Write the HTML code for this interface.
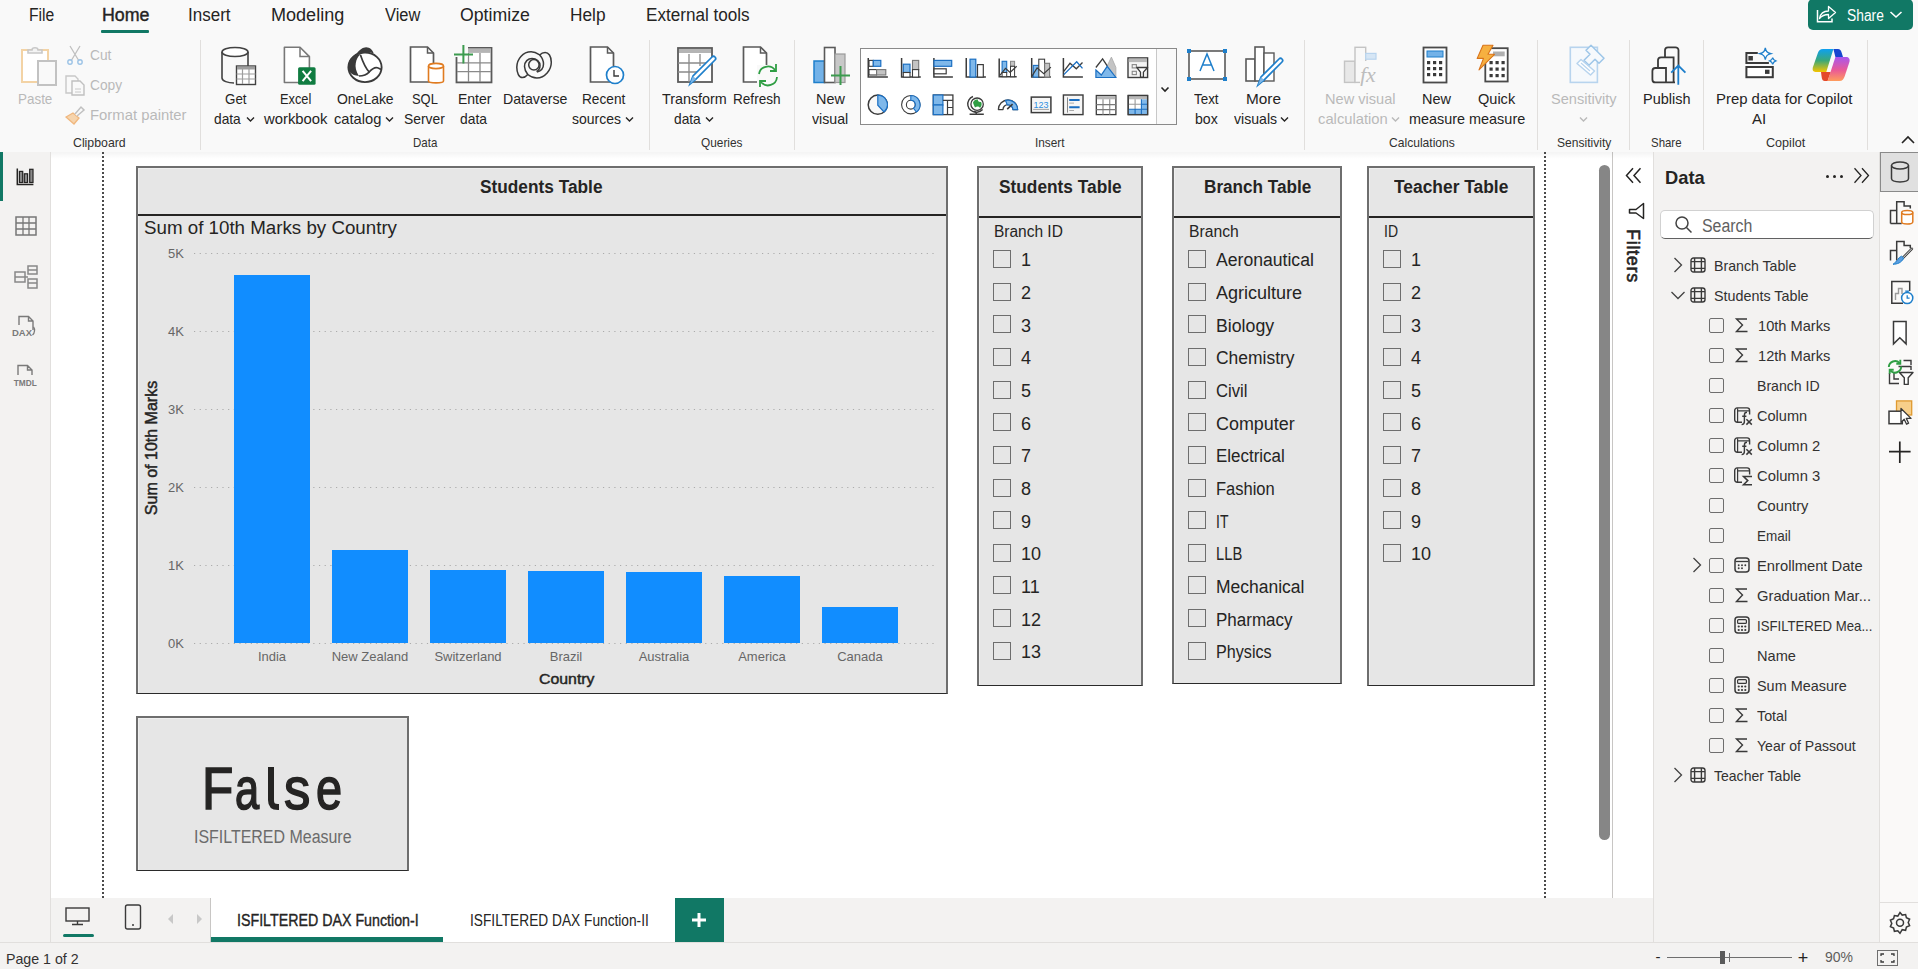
<!DOCTYPE html>
<html><head><meta charset="utf-8"><title>Power BI</title>
<style>
html,body{margin:0;padding:0;width:1918px;height:969px;overflow:hidden;background:#fff;font-family:'Liberation Sans', sans-serif;}
div,svg{box-sizing:border-box;}
</style></head><body>
<div style="position:absolute;left:0px;top:0px;width:1918px;height:152px;background:#f9f9f9;"></div><div style="position:absolute;left:0px;top:152px;width:1918px;height:3px;background:linear-gradient(#e6e6e6,#f9f9f9 0%,rgba(255,255,255,0));"></div><div style="position:absolute;left:0px;top:152px;width:51px;height:790px;background:#f3f2f1;"></div><div style="position:absolute;left:50px;top:152px;width:1px;height:746px;background:#e1dfdd;"></div><div style="position:absolute;left:51px;top:152px;width:1561px;height:746px;background:#ffffff;"></div><div style="position:absolute;left:1612px;top:152px;width:41px;height:746px;background:#ffffff;"></div><div style="position:absolute;left:1612px;top:152px;width:1px;height:746px;background:#c8c6c4;"></div><div style="position:absolute;left:1653px;top:152px;width:227px;height:790px;background:#f3f2f1;"></div><div style="position:absolute;left:1653px;top:152px;width:1px;height:790px;background:#e1dfdd;"></div><div style="position:absolute;left:1880px;top:152px;width:38px;height:790px;background:#faf9f8;"></div><div style="position:absolute;left:1879px;top:152px;width:1px;height:790px;background:#e1dfdd;"></div><div style="position:absolute;left:51px;top:898px;width:1602px;height:44px;background:#f3f2f1;"></div><div style="position:absolute;left:0px;top:942px;width:1918px;height:27px;background:#f3f2f1;"></div><div style="position:absolute;left:0px;top:942px;width:1918px;height:1px;background:#e1dfdd;"></div><div style="position:absolute;top:5.77px;font-size:18px;line-height:18px;color:#252423;font-weight:normal;white-space:nowrap;left:28.75px;transform:scaleX(0.8707);transform-origin:0 0;">File</div><div style="position:absolute;top:5.77px;font-size:18px;line-height:18px;color:#252423;font-weight:normal;white-space:nowrap;left:101.50px;transform:scaleX(0.9896);transform-origin:0 0;-webkit-text-stroke:0.4px #252423;">Home</div><div style="position:absolute;top:5.77px;font-size:18px;line-height:18px;color:#252423;font-weight:normal;white-space:nowrap;left:188.00px;transform:scaleX(0.9444);transform-origin:0 0;">Insert</div><div style="position:absolute;top:5.77px;font-size:18px;line-height:18px;color:#252423;font-weight:normal;white-space:nowrap;left:271.20px;transform:scaleX(1.0027);transform-origin:0 0;">Modeling</div><div style="position:absolute;top:5.77px;font-size:18px;line-height:18px;color:#252423;font-weight:normal;white-space:nowrap;left:384.50px;transform:scaleX(0.9125);transform-origin:0 0;">View</div><div style="position:absolute;top:5.77px;font-size:18px;line-height:18px;color:#252423;font-weight:normal;white-space:nowrap;left:460.20px;transform:scaleX(0.9831);transform-origin:0 0;">Optimize</div><div style="position:absolute;top:5.77px;font-size:18px;line-height:18px;color:#252423;font-weight:normal;white-space:nowrap;left:570.00px;transform:scaleX(0.9595);transform-origin:0 0;">Help</div><div style="position:absolute;top:5.77px;font-size:18px;line-height:18px;color:#252423;font-weight:normal;white-space:nowrap;left:646.20px;transform:scaleX(0.9505);transform-origin:0 0;">External tools</div><div style="position:absolute;left:101px;top:30px;width:48px;height:3px;background:#117865;border-radius:1px;"></div><div style="position:absolute;left:1808px;top:-1px;width:105px;height:31px;background:#117865;border-radius:5px;"></div><svg style="position:absolute;left:1816px;top:3px;" width="22" height="22" viewBox="0 0 22 22" fill="none"><path d="M1.5 7V18.8H16V15.5" stroke="#fff" stroke-width="1.5"/><path d="M3.5 15.5C4.5 10 8 8 12.5 8V3.5L19.5 9.5 12.5 15.5V11.5C9 11.5 6 12.5 3.5 15.5Z" stroke="#fff" stroke-width="1.3" stroke-linejoin="round"/></svg><div style="position:absolute;top:8.46px;font-size:16px;line-height:16px;color:#ffffff;font-weight:normal;white-space:nowrap;left:1846.70px;transform:scaleX(0.8628);transform-origin:0 0;">Share</div><svg style="position:absolute;left:1889px;top:10px;" width="14" height="10" viewBox="0 0 14 10" fill="none"><path d="M1.5 2l5.5 5 5.5-5" stroke="#fff" stroke-width="1.6"/></svg><div style="position:absolute;left:200px;top:40px;width:1px;height:110px;background:#e1dfdd;"></div><div style="position:absolute;left:649px;top:40px;width:1px;height:110px;background:#e1dfdd;"></div><div style="position:absolute;left:794px;top:40px;width:1px;height:110px;background:#e1dfdd;"></div><div style="position:absolute;left:1304px;top:40px;width:1px;height:110px;background:#e1dfdd;"></div><div style="position:absolute;left:1537px;top:40px;width:1px;height:110px;background:#e1dfdd;"></div><div style="position:absolute;left:1629px;top:40px;width:1px;height:110px;background:#e1dfdd;"></div><div style="position:absolute;left:1703px;top:40px;width:1px;height:110px;background:#e1dfdd;"></div><div style="position:absolute;left:1867px;top:40px;width:1px;height:110px;background:#e1dfdd;"></div><div style="position:absolute;top:136.00px;font-size:13px;line-height:13px;color:#323130;font-weight:normal;white-space:nowrap;left:73.00px;transform:scaleX(0.9464);transform-origin:0 0;">Clipboard</div><div style="position:absolute;top:136.00px;font-size:13px;line-height:13px;color:#323130;font-weight:normal;white-space:nowrap;left:412.50px;transform:scaleX(0.8857);transform-origin:0 0;">Data</div><div style="position:absolute;top:136.00px;font-size:13px;line-height:13px;color:#323130;font-weight:normal;white-space:nowrap;left:700.80px;transform:scaleX(0.9109);transform-origin:0 0;">Queries</div><div style="position:absolute;top:136.00px;font-size:13px;line-height:13px;color:#323130;font-weight:normal;white-space:nowrap;left:1034.60px;transform:scaleX(0.9091);transform-origin:0 0;">Insert</div><div style="position:absolute;top:136.00px;font-size:13px;line-height:13px;color:#323130;font-weight:normal;white-space:nowrap;left:1388.60px;transform:scaleX(0.9296);transform-origin:0 0;">Calculations</div><div style="position:absolute;top:136.00px;font-size:13px;line-height:13px;color:#323130;font-weight:normal;white-space:nowrap;left:1556.80px;transform:scaleX(0.9271);transform-origin:0 0;">Sensitivity</div><div style="position:absolute;top:136.00px;font-size:13px;line-height:13px;color:#323130;font-weight:normal;white-space:nowrap;left:1651.00px;transform:scaleX(0.8800);transform-origin:0 0;">Share</div><div style="position:absolute;top:136.00px;font-size:13px;line-height:13px;color:#323130;font-weight:normal;white-space:nowrap;left:1765.50px;transform:scaleX(0.9683);transform-origin:0 0;">Copilot</div><svg style="position:absolute;left:1900px;top:135px;" width="16" height="10" viewBox="0 0 16 10" fill="none"><path d="M2 8l6-6 6 6" stroke="#252423" stroke-width="1.6"/></svg><svg style="position:absolute;left:18px;top:45px;" width="40" height="42" viewBox="0 0 40 42" fill="none">
<rect x="4" y="5" width="26" height="32" fill="#fff" stroke="#f3d3a5" stroke-width="2"/>
<path d="M10 8v-3h4c0-3 6-3 6 0h4v3z" fill="#f4f4f4" stroke="#c8c8c8" stroke-width="1.6"/>
<rect x="20" y="16" width="18" height="24" fill="#f9f9f9" stroke="#c2c2c2" stroke-width="2"/>
</svg><div style="position:absolute;top:91.31px;font-size:15px;line-height:15px;color:#b9b9b9;font-weight:normal;white-space:nowrap;left:18.00px;transform:scaleX(0.8947);transform-origin:0 0;">Paste</div><svg style="position:absolute;left:66px;top:44px;" width="18" height="22" viewBox="0 0 18 22" fill="none"><path d="M4 2l9 15M14 2l-9 15" stroke="#c0c0c0" stroke-width="1.3"/><circle cx="4" cy="18" r="2.2" stroke="#9cc3e6" stroke-width="1.4"/><circle cx="14" cy="18" r="2.2" stroke="#9cc3e6" stroke-width="1.4"/></svg><div style="position:absolute;top:46.81px;font-size:15px;line-height:15px;color:#b9b9b9;font-weight:normal;white-space:nowrap;left:90.00px;transform:scaleX(0.9167);transform-origin:0 0;">Cut</div><svg style="position:absolute;left:64px;top:74px;" width="22" height="22" viewBox="0 0 22 22" fill="none"><path d="M2 2h9l3 3v14H2z" fill="#f9f9f9" stroke="#c8c8c8" stroke-width="1.4"/><path d="M8 7h8l4 4v10H8z" fill="#f9f9f9" stroke="#c0c0c0" stroke-width="1.4"/><path d="M11 15h6M11 18h6" stroke="#c8c8c8"/></svg><div style="position:absolute;top:76.81px;font-size:15px;line-height:15px;color:#b9b9b9;font-weight:normal;white-space:nowrap;left:90.00px;transform:scaleX(0.9167);transform-origin:0 0;">Copy</div><svg style="position:absolute;left:64px;top:104px;" width="22" height="22" viewBox="0 0 22 22" fill="none"><path d="M2 13l8 7 5-6-6-5z" fill="#f6d4ad" stroke="#f0b77e" stroke-width="1.3"/><path d="M11 10l6-7 3 3-7 6" stroke="#c0c0c0" stroke-width="1.5" fill="#f9f9f9"/></svg><div style="position:absolute;top:106.81px;font-size:15px;line-height:15px;color:#b9b9b9;font-weight:normal;white-space:nowrap;left:90.00px;transform:scaleX(0.9898);transform-origin:0 0;">Format painter</div><svg style="position:absolute;left:218px;top:44px;" width="42" height="44" viewBox="0 0 42 44" fill="none">
<path d="M4 8v26c0 3 6 5 12 5" stroke="#424242" stroke-width="1.6"/>
<ellipse cx="17" cy="8" rx="13" ry="4.5" stroke="#424242" stroke-width="1.6" fill="#fff"/>
<path d="M30 8v14" stroke="#424242" stroke-width="1.6"/>
<rect x="18.5" y="22" width="19" height="18.5" fill="#fff" stroke="#424242" stroke-width="1.4"/>
<rect x="19" y="22.5" width="18" height="3" fill="#9e9e9e"/>
<path d="M18.5 30h19M18.5 35h19M24.5 25v15M31 25v15" stroke="#9e9e9e" stroke-width="1.2"/>
</svg><div style="position:absolute;top:91.31px;font-size:15px;line-height:15px;color:#252423;font-weight:normal;white-space:nowrap;left:224.60px;transform:scaleX(0.8920);transform-origin:0 0;">Get</div><div style="position:absolute;top:111.31px;font-size:15px;line-height:15px;color:#252423;font-weight:normal;white-space:nowrap;left:214.40px;transform:scaleX(0.9167);transform-origin:0 0;">data</div><svg style="position:absolute;left:245.5px;top:116px;" width="9" height="7" viewBox="0 0 9 7" fill="none"><path d="M1 1.5l3.5 3.5 3.5-3.5" stroke="#252423" stroke-width="1.4"/></svg><svg style="position:absolute;left:280px;top:44px;" width="40" height="44" viewBox="0 0 40 44" fill="none">
<path d="M4.4 3.2H20L29.4 12.6V38.5H4.4Z" fill="#fff" stroke="#787878" stroke-width="1.6" stroke-linejoin="round"/>
<path d="M20 3.2V12.6H29.4" stroke="#787878" stroke-width="1.5"/>
<rect x="18.1" y="23.2" width="17.5" height="17.5" rx="1.5" fill="#107c41"/>
<path d="M22.6 26.8l8.5 10.4M31.1 26.8l-8.5 10.4" stroke="#fff" stroke-width="2"/>
</svg><div style="position:absolute;top:91.31px;font-size:15px;line-height:15px;color:#252423;font-weight:normal;white-space:nowrap;left:280.40px;transform:scaleX(0.8541);transform-origin:0 0;">Excel</div><div style="position:absolute;top:111.31px;font-size:15px;line-height:15px;color:#252423;font-weight:normal;white-space:nowrap;left:264.49px;transform:scaleX(0.9886);transform-origin:0 0;">workbook</div><svg style="position:absolute;left:346px;top:45px;" width="40" height="40" viewBox="0 0 40 40" fill="none">
<ellipse cx="19" cy="22.3" rx="16.6" ry="14.8" stroke="#3a3a3a" stroke-width="1.9" fill="#fff"/>
<path d="M9.8 9.4C4 12 2 18 2.05 22C2.5 27 5 30 12.9 31C10 26 9 22 9.8 18C10.5 14 12 11 14.4 9.4Z" fill="#3a3a3a"/>
<path d="M9.8 9.4C13 5 17 2.2 20.1 2.2C24 2.2 26.5 5 27.8 8.4C23 6.8 18 7 14.4 9.4Z" fill="#3a3a3a"/>
<path d="M14.5 10C16.5 16 19.5 23 23.2 27C26 24 29 22 31.4 22.8C33 23.3 34 24 35 24.5" stroke="#3a3a3a" stroke-width="1.7"/>
<path d="M12.9 31C17 31 21 29.5 23.2 27" stroke="#3a3a3a" stroke-width="1.7"/>
</svg><div style="position:absolute;top:91.31px;font-size:15px;line-height:15px;color:#252423;font-weight:normal;white-space:nowrap;left:337.00px;transform:scaleX(0.9303);transform-origin:0 0;">OneLake</div><div style="position:absolute;top:111.31px;font-size:15px;line-height:15px;color:#252423;font-weight:normal;white-space:nowrap;left:334.00px;transform:scaleX(0.9792);transform-origin:0 0;">catalog</div><svg style="position:absolute;left:385px;top:116px;" width="9" height="7" viewBox="0 0 9 7" fill="none"><path d="M1 1.5l3.5 3.5 3.5-3.5" stroke="#252423" stroke-width="1.4"/></svg><svg style="position:absolute;left:407px;top:44px;" width="40" height="44" viewBox="0 0 40 44" fill="none">
<path d="M3.5 3h17l6 6v29h-23z" fill="#fff" stroke="#5a5a5a" stroke-width="1.7"/>
<path d="M20.5 3v6h6" stroke="#5a5a5a" stroke-width="1.5"/>
<path d="M21.5 22v15c0 2.5 15 2.5 15 0V22" fill="#fff" stroke="#e07b20" stroke-width="1.6"/>
<ellipse cx="29" cy="22" rx="7.5" ry="2.6" fill="#fff" stroke="#e07b20" stroke-width="1.6"/>
</svg><div style="position:absolute;top:91.31px;font-size:15px;line-height:15px;color:#252423;font-weight:normal;white-space:nowrap;left:411.50px;transform:scaleX(0.8600);transform-origin:0 0;">SQL</div><div style="position:absolute;top:111.31px;font-size:15px;line-height:15px;color:#252423;font-weight:normal;white-space:nowrap;left:404.00px;transform:scaleX(0.9250);transform-origin:0 0;">Server</div><svg style="position:absolute;left:452px;top:43px;" width="44" height="44" viewBox="0 0 44 44" fill="none">
<rect x="4.5" y="4.9" width="35" height="34.5" fill="#fff" stroke="#5a5a5a" stroke-width="1.8"/>
<rect x="15" y="5.4" width="24" height="4.5" fill="#b4b4b4"/>
<path d="M5 19.8h34M5 28.6h34M16.5 10v29M28 10v29" stroke="#8a8a8a" stroke-width="1.3"/>
<rect x="0" y="0" width="16" height="14" fill="#f9f9f9"/>
<path d="M2 11.4h19M11.4 2v18.5" stroke="#3c9b4f" stroke-width="2"/>
</svg><div style="position:absolute;top:91.31px;font-size:15px;line-height:15px;color:#252423;font-weight:normal;white-space:nowrap;left:458.30px;transform:scaleX(0.9333);transform-origin:0 0;">Enter</div><div style="position:absolute;top:111.31px;font-size:15px;line-height:15px;color:#252423;font-weight:normal;white-space:nowrap;left:460.30px;transform:scaleX(0.9233);transform-origin:0 0;">data</div><svg style="position:absolute;left:510px;top:45px;" width="44" height="38" viewBox="0 0 44 38" fill="none">
<path d="M29.7 9.9C26 7.5 23.5 6.8 21.1 6.8C13 6.8 6.8 14 6.8 22.3C6.8 28 9 32.6 12.4 32.6C14.5 32.6 16.5 31 17.8 29.5C20.5 31.8 23.5 33 26.8 33C35 33 41.3 25 41.3 17.3C41.3 11 38.5 7.4 35.1 7.4C33 7.4 31 8.5 29.7 9.9Z" stroke="#3a3a3a" stroke-width="1.5"/>
<path d="M29.7 9.9C32.5 13 33.5 16 33.5 19C33.5 23 31 26 27 27" stroke="#3a3a3a" stroke-width="1.5"/>
<path d="M17.8 29.5C15.5 26.5 14.5 24 14.5 21.5C14.5 16.5 18 13.5 22 13.5C26.5 13.5 30 16.5 30 20.5C30 23.5 28.5 25.5 26.5 26.5" stroke="#3a3a3a" stroke-width="1.5"/>
<circle cx="23.9" cy="19.8" r="5.2" stroke="#3a3a3a" stroke-width="1.5"/>
</svg><div style="position:absolute;top:91.31px;font-size:15px;line-height:15px;color:#252423;font-weight:normal;white-space:nowrap;left:502.60px;transform:scaleX(0.9426);transform-origin:0 0;">Dataverse</div><svg style="position:absolute;left:587px;top:44px;" width="40" height="44" viewBox="0 0 40 44" fill="none">
<path d="M3.5 3h17l6 6v29h-23z" fill="#fff" stroke="#5a5a5a" stroke-width="1.7"/>
<path d="M20.5 3v6h6" stroke="#5a5a5a" stroke-width="1.5"/>
<circle cx="28" cy="31" r="8.5" fill="#fff" stroke="#1e7fcb" stroke-width="1.7"/>
<path d="M27 26v6h5" stroke="#3a3a3a" stroke-width="1.4"/>
</svg><div style="position:absolute;top:91.31px;font-size:15px;line-height:15px;color:#252423;font-weight:normal;white-space:nowrap;left:582.30px;transform:scaleX(0.9104);transform-origin:0 0;">Recent</div><div style="position:absolute;top:111.31px;font-size:15px;line-height:15px;color:#252423;font-weight:normal;white-space:nowrap;left:571.70px;transform:scaleX(0.9340);transform-origin:0 0;">sources</div><svg style="position:absolute;left:624.5px;top:116px;" width="9" height="7" viewBox="0 0 9 7" fill="none"><path d="M1 1.5l3.5 3.5 3.5-3.5" stroke="#252423" stroke-width="1.4"/></svg><svg style="position:absolute;left:674px;top:44px;" width="44" height="46" viewBox="0 0 44 46" fill="none">
<rect x="4" y="4" width="34" height="34" fill="#fff" stroke="#5a5a5a" stroke-width="1.8"/>
<rect x="5" y="5" width="32" height="4" fill="#b4b4b4"/>
<path d="M4 19h34M4 28h22M15 10v28M26 10v12" stroke="#8a8a8a" stroke-width="1.3"/>
<path d="M16 40l3-8 19-19c2-2 5 1 3 3L22 35z" fill="#fff" stroke="#1e7fcb" stroke-width="1.7"/>
<path d="M16 40l3-8 3 3z" fill="#7fb6e6"/>
</svg><div style="position:absolute;top:91.31px;font-size:15px;line-height:15px;color:#252423;font-weight:normal;white-space:nowrap;left:662.40px;transform:scaleX(0.9559);transform-origin:0 0;">Transform</div><div style="position:absolute;top:111.31px;font-size:15px;line-height:15px;color:#252423;font-weight:normal;white-space:nowrap;left:673.50px;transform:scaleX(0.9167);transform-origin:0 0;">data</div><svg style="position:absolute;left:705px;top:116px;" width="9" height="7" viewBox="0 0 9 7" fill="none"><path d="M1 1.5l3.5 3.5 3.5-3.5" stroke="#252423" stroke-width="1.4"/></svg><svg style="position:absolute;left:740px;top:44px;" width="40" height="46" viewBox="0 0 40 46" fill="none">
<path d="M3.5 3h17l6 6v29h-23z" fill="#fff" stroke="#5a5a5a" stroke-width="1.7"/>
<path d="M20.5 3v6h6" stroke="#5a5a5a" stroke-width="1.5"/>
<rect x="17" y="21" width="22" height="22" fill="#f9f9f9"/>
<path d="M19 30a9 9 0 0 1 16-4M37 33a9 9 0 0 1-16 5" stroke="#2f9e44" stroke-width="1.8"/>
<path d="M36 20v7h-6M20 43v-6h6" stroke="#2f9e44" stroke-width="1.8"/>
</svg><div style="position:absolute;top:91.31px;font-size:15px;line-height:15px;color:#252423;font-weight:normal;white-space:nowrap;left:733.00px;transform:scaleX(0.9057);transform-origin:0 0;">Refresh</div><svg style="position:absolute;left:810px;top:44px;" width="44" height="44" viewBox="0 0 44 44" fill="none">
<rect x="4" y="17" width="10.5" height="21.5" fill="#73b2e8" stroke="#1e7fcb" stroke-width="1.5"/>
<rect x="14.5" y="3.5" width="10.5" height="35" fill="#fff" stroke="#5a5a5a" stroke-width="1.6"/>
<rect x="25" y="10" width="10" height="28.5" fill="#c8c8c8" stroke="#9a9a9a" stroke-width="1.2"/>
<path d="M21 31.5h19M30.5 22v19" stroke="#3c9b4f" stroke-width="2"/>
</svg><div style="position:absolute;top:91.31px;font-size:15px;line-height:15px;color:#252423;font-weight:normal;white-space:nowrap;left:815.70px;transform:scaleX(0.9600);transform-origin:0 0;">New</div><div style="position:absolute;top:111.31px;font-size:15px;line-height:15px;color:#252423;font-weight:normal;white-space:nowrap;left:811.70px;transform:scaleX(0.9447);transform-origin:0 0;">visual</div><div style="position:absolute;left:860px;top:48px;width:317px;height:77px;background:#fff;border:1px solid #8a8a8a;"></div><div style="position:absolute;left:1157px;top:49px;width:19px;height:75px;background:#f9f9f9;"></div><div style="position:absolute;left:1156px;top:49px;width:1px;height:75px;background:#c8c8c8;"></div><svg style="position:absolute;left:1160px;top:86px;" width="10" height="8" viewBox="0 0 10 8" fill="none"><path d="M1.5 1.5l3.5 3.5 3.5-3.5" stroke="#252423" stroke-width="1.6"/></svg><svg style="position:absolute;left:866px;top:56px;" width="22" height="23" viewBox="0 0 22 23" fill="none"><path d="M2.25 1.9V21.1H21.9" stroke="#3c3c3c" stroke-width="1.5"/><rect x="3" y="4.4" width="4.3" height="5.9" fill="#fff" stroke="#3c3c3c" stroke-width="1.1"/><rect x="7.3" y="4.4" width="7.5" height="5.9" fill="#7fb8ea" stroke="#1b6fc2" stroke-width="1.2"/><rect x="3" y="13.6" width="7.6" height="5.4" fill="#fff" stroke="#3c3c3c" stroke-width="1.1"/><rect x="10.6" y="13.6" width="9.2" height="5.4" fill="#c4c4c4" stroke="#777" stroke-width="1.1"/></svg><svg style="position:absolute;left:866px;top:93px;" width="22" height="23" viewBox="0 0 22 23" fill="none"><circle cx="11.8" cy="11.7" r="9.6" fill="#f8f8f8" stroke="#3c3c3c" stroke-width="1.5"/><path d="M11.8 2.1A9.6 9.6 0 0 1 18 19L11.8 12.2Z" fill="#7fb8ea" stroke="#1b6fc2" stroke-width="1.2"/></svg><svg style="position:absolute;left:899px;top:56px;" width="22" height="23" viewBox="0 0 22 23" fill="none"><path d="M2.6 1.9V21.1H21.8" stroke="#3c3c3c" stroke-width="1.5"/><rect x="4.3" y="8.2" width="6.7" height="8.3" fill="#7fb8ea" stroke="#1b6fc2" stroke-width="1.2"/><rect x="4.3" y="16.5" width="6.7" height="4.6" fill="#fff" stroke="#3c3c3c" stroke-width="1.1"/><rect x="13.5" y="4.4" width="6.2" height="9.2" fill="#c4c4c4" stroke="#777" stroke-width="1.1"/><rect x="13.5" y="13.6" width="6.2" height="7.5" fill="#fff" stroke="#3c3c3c" stroke-width="1.1"/></svg><svg style="position:absolute;left:899px;top:93px;" width="22" height="23" viewBox="0 0 22 23" fill="none"><circle cx="11.8" cy="11.7" r="9.2" fill="#fff" stroke="#3c3c3c" stroke-width="1.1"/><circle cx="11.8" cy="11.7" r="4.4" fill="#fff" stroke="#3c3c3c" stroke-width="1.1"/><path d="M11.8 2.5A9.2 9.2 0 0 1 17.4 19L14.5 15.3A4.4 4.4 0 0 0 11.8 7.3Z" fill="#7fb8ea" stroke="#1b6fc2" stroke-width="1.1"/></svg><svg style="position:absolute;left:932px;top:56px;" width="22" height="23" viewBox="0 0 22 23" fill="none"><path d="M1.9 1.9V21.1H20.9" stroke="#3c3c3c" stroke-width="1.5"/><rect x="2" y="4.4" width="17.7" height="5.9" fill="#7fb8ea" stroke="#1b6fc2" stroke-width="1.2"/><rect x="2" y="12.8" width="12.2" height="5" fill="#fff" stroke="#3c3c3c" stroke-width="1.2"/></svg><svg style="position:absolute;left:932px;top:93px;" width="22" height="23" viewBox="0 0 22 23" fill="none"><rect x="1.3" y="2" width="19.6" height="19.6" fill="#fff" stroke="#3c3c3c" stroke-width="1.3"/><rect x="1.3" y="2" width="9.6" height="10" fill="#7fb8ea" stroke="#1b6fc2" stroke-width="1.2"/><rect x="1.3" y="12" width="9.6" height="9.6" fill="#7fb8ea" stroke="#1b6fc2" stroke-width="1.2"/><path d="M10.9 7.4H20.9M15.5 7.4V21.6M15.5 14.5H20.9" stroke="#3c3c3c" stroke-width="1.2"/></svg><svg style="position:absolute;left:964px;top:56px;" width="22" height="23" viewBox="0 0 22 23" fill="none"><path d="M2.25 1.9V21.1H21.9" stroke="#3c3c3c" stroke-width="1.5"/><rect x="6" y="3.2" width="5.8" height="17.9" fill="#7fb8ea" stroke="#1b6fc2" stroke-width="1.2"/><rect x="13.5" y="8.6" width="5.8" height="12.5" fill="#fff" stroke="#3c3c3c" stroke-width="1.2"/></svg><svg style="position:absolute;left:964px;top:93px;" width="22" height="23" viewBox="0 0 22 23" fill="none"><path d="M9 3.5A8 8 0 0 0 12 19" stroke="#3c3c3c" stroke-width="1.4"/><path d="M18.6 16.6A8 8 0 0 1 9.5 18.4" stroke="#3c3c3c" stroke-width="1.4"/><circle cx="13.1" cy="11.2" r="6.2" fill="#fff" stroke="#3c3c3c" stroke-width="1.3"/><path d="M9 9.5C10 7 12 6 14 6.5 13.5 8 15 9.5 17 9 18.5 11 17 14 16 15 15 13 13 13 11 14.5 10 12.5 9.5 11 9 9.5Z" fill="#2f9e44"/><path d="M12.2 19V21.2M5.6 21.2H19.8" stroke="#3c3c3c" stroke-width="1.5"/></svg><svg style="position:absolute;left:997px;top:56px;" width="22" height="23" viewBox="0 0 22 23" fill="none"><path d="M2.2 2.5V20.7H19.7" stroke="#3c3c3c" stroke-width="1.5"/><rect x="5.1" y="5.3" width="4.6" height="11.2" fill="#7fb8ea" stroke="#1b6fc2" stroke-width="1.1"/><rect x="5.1" y="16.5" width="4.6" height="4.2" fill="#fff" stroke="#3c3c3c"/><rect x="13.5" y="5.3" width="4.1" height="5" fill="#c4c4c4" stroke="#888"/><rect x="13.5" y="10.3" width="4.1" height="10.4" fill="#fff" stroke="#3c3c3c"/><path d="M2.9 19.4L8.5 12.3 13.1 16.5 19.7 10.3" stroke="#3c3c3c" stroke-width="1.2"/></svg><svg style="position:absolute;left:997px;top:93px;" width="22" height="23" viewBox="0 0 22 23" fill="none"><path d="M1.4 16.6A9.6 9.6 0 0 1 20.6 16.6H16A5 5 0 0 0 6 16.6Z" fill="#fff" stroke="#3c3c3c" stroke-width="1.3" stroke-linejoin="round"/><path d="M8.5 7.4A9.6 9.6 0 0 1 20.6 16.6H16A5 5 0 0 0 10.3 11.9Z" fill="#7fb8ea" stroke="#1b6fc2" stroke-width="1.2"/><path d="M10.2 16.2L15.6 11.2" stroke="#3c3c3c" stroke-width="1.6"/></svg><svg style="position:absolute;left:1030px;top:56px;" width="22" height="23" viewBox="0 0 22 23" fill="none"><path d="M1.7 1.9V21.1H20.9" stroke="#3c3c3c" stroke-width="1.5"/><rect x="3.3" y="9.4" width="6.3" height="11.7" fill="#7fb8ea" stroke="#1b6fc2" stroke-width="1.1"/><rect x="8.8" y="3.2" width="5.8" height="17.9" fill="#fff" stroke="#3c3c3c" stroke-width="1.1"/><rect x="14.6" y="7.3" width="5" height="13.8" fill="#c4c4c4" stroke="#777" stroke-width="1.1"/><path d="M2.1 19.9L7.1 11.9 13.8 17.8 20.9 11.1" stroke="#3c3c3c" stroke-width="1.2"/></svg><svg style="position:absolute;left:1030px;top:93px;" width="22" height="23" viewBox="0 0 22 23" fill="none"><rect x="1.3" y="4.1" width="19.6" height="15.5" fill="#f6f6f6" stroke="#3c3c3c" stroke-width="1.5"/><text x="11.1" y="14.6" font-size="9.5" text-anchor="middle" fill="#2f8fe0" font-family="Liberation Sans" textLength="15" lengthAdjust="spacingAndGlyphs">123</text><path d="M3.2 16.4H19" stroke="#999" stroke-width="0.9"/></svg><svg style="position:absolute;left:1062px;top:56px;" width="22" height="23" viewBox="0 0 22 23" fill="none"><path d="M1.4 1.9V21.1H20.9" stroke="#3c3c3c" stroke-width="1.5"/><path d="M1.8 15.3L8 7.3 14.3 12.8 20.5 6.5" stroke="#3c3c3c" stroke-width="1.3"/><path d="M1.8 18.6L14.7 5.7 20.5 12.4" stroke="#1b6fc2" stroke-width="1.3"/></svg><svg style="position:absolute;left:1062px;top:93px;" width="22" height="23" viewBox="0 0 22 23" fill="none"><rect x="1.4" y="2" width="19.6" height="19.6" fill="#f6f6f6" stroke="#3c3c3c" stroke-width="1.4"/><path d="M5.5 4.4V19.6" stroke="#888" stroke-width="1"/><path d="M7.2 7H17.6M7.2 14.3H17.6" stroke="#1b6fc2" stroke-width="1.9"/><path d="M7.2 10.1H12M7.2 17.5H12" stroke="#aaa" stroke-width="1"/></svg><svg style="position:absolute;left:1095px;top:56px;" width="22" height="23" viewBox="0 0 22 23" fill="none"><path d="M12.2 9.9L16.4 1.1 20.9 11.5V21.5H12.2Z" fill="#c4c4c4" stroke="#aaa" stroke-width="0.8"/><path d="M0.9 11.5L7.6 2.8 12.2 9.9" fill="#fff" stroke="#3c3c3c" stroke-width="1.3"/><path d="M0.9 14L6.3 19 12.2 10.3 20.9 21.5H0.9Z" fill="#7fb8ea" stroke="#1b6fc2" stroke-width="1.2"/></svg><svg style="position:absolute;left:1095px;top:93px;" width="22" height="23" viewBox="0 0 22 23" fill="none"><rect x="1.3" y="2.5" width="19.6" height="19.1" fill="#fff" stroke="#3c3c3c" stroke-width="1.3"/><rect x="1.9" y="3.1" width="18.4" height="3.2" fill="#b8b8b8"/><path d="M8 6.3V21.6M14.7 6.3V21.6" stroke="#9a9a9a" stroke-width="1.3"/><path d="M1.3 11.6H20.9M1.3 16.6H20.9" stroke="#7a7a7a" stroke-width="1.1"/></svg><svg style="position:absolute;left:1127px;top:56px;" width="22" height="23" viewBox="0 0 22 23" fill="none"><rect x="1" y="1.9" width="19.6" height="19.6" fill="#f4f4f4" stroke="#3c3c3c" stroke-width="1.4"/><rect x="1.7" y="2.6" width="18.2" height="3.5" fill="#b8b8b8"/><rect x="5.2" y="8.6" width="4.2" height="3.3" fill="none" stroke="#888" stroke-width="1.1"/><rect x="5.2" y="15.3" width="4.2" height="3.3" fill="none" stroke="#888" stroke-width="1.1"/><path d="M9.8 11.5H20.6L16.4 16.1V21.1H13.5V16.1Z" fill="#fff" stroke="#3c3c3c" stroke-width="1.3" stroke-linejoin="round"/></svg><svg style="position:absolute;left:1127px;top:93px;" width="22" height="23" viewBox="0 0 22 23" fill="none"><rect x="1.2" y="2.5" width="19.4" height="19.1" fill="#fff" stroke="#3c3c3c" stroke-width="1.3"/><rect x="1.8" y="3.1" width="18.2" height="3.2" fill="#b8b8b8"/><rect x="14.4" y="6.3" width="6.2" height="15.3" fill="#7fb8ea"/><rect x="1.2" y="16.2" width="19.4" height="5.4" fill="#7fb8ea"/><path d="M8.1 6.3V16.2M1.2 11.2H14.4" stroke="#9a9a9a" stroke-width="1.1"/><path d="M14.4 6.3V21.6M8.1 16.2V21.6M14.4 11.2H20.6M1.2 16.2H20.6" stroke="#1b6fc2" stroke-width="1.1"/><rect x="1.2" y="2.5" width="19.4" height="19.1" fill="none" stroke="#3c3c3c" stroke-width="1.3"/></svg><svg style="position:absolute;left:1186px;top:48px;" width="42" height="34" viewBox="0 0 42 34" fill="none">
<rect x="3" y="3" width="36" height="28" fill="#fff" stroke="#5a5a5a" stroke-width="1.6"/>
<rect x="1" y="1" width="4" height="4" fill="#1e7fcb"/><rect x="37" y="1" width="4" height="4" fill="#1e7fcb"/>
<rect x="1" y="29" width="4" height="4" fill="#1e7fcb"/><rect x="37" y="29" width="4" height="4" fill="#1e7fcb"/>
<path d="M14 23l7-17 7 17M16.5 17h9" stroke="#1e7fcb" stroke-width="1.5"/>
</svg><div style="position:absolute;top:91.31px;font-size:15px;line-height:15px;color:#252423;font-weight:normal;white-space:nowrap;left:1194.00px;transform:scaleX(0.8929);transform-origin:0 0;">Text</div><div style="position:absolute;top:111.31px;font-size:15px;line-height:15px;color:#252423;font-weight:normal;white-space:nowrap;left:1194.50px;transform:scaleX(0.9400);transform-origin:0 0;">box</div><svg style="position:absolute;left:1243px;top:44px;" width="44" height="44" viewBox="0 0 44 44" fill="none">
<rect x="3" y="15" width="9" height="22" fill="#fff" stroke="#5a5a5a" stroke-width="1.6"/>
<rect x="12" y="3" width="9" height="34" fill="#fff" stroke="#5a5a5a" stroke-width="1.6"/>
<rect x="21" y="9" width="10" height="28" fill="#fff" stroke="#5a5a5a" stroke-width="1.4"/>
<path d="M15 41l3-8 18-18c2-2 5 1 3 3L21 36z" fill="#fff" stroke="#1e7fcb" stroke-width="1.7"/>
<path d="M15 41l3-8 3 3z" fill="#7fb6e6"/>
</svg><div style="position:absolute;top:91.31px;font-size:15px;line-height:15px;color:#252423;font-weight:normal;white-space:nowrap;left:1245.70px;transform:scaleX(1.0235);transform-origin:0 0;">More</div><div style="position:absolute;top:111.31px;font-size:15px;line-height:15px;color:#252423;font-weight:normal;white-space:nowrap;left:1233.70px;transform:scaleX(0.9391);transform-origin:0 0;">visuals</div><svg style="position:absolute;left:1280px;top:116px;" width="9" height="7" viewBox="0 0 9 7" fill="none"><path d="M1 1.5l3.5 3.5 3.5-3.5" stroke="#252423" stroke-width="1.4"/></svg><svg style="position:absolute;left:1340px;top:44px;" width="42" height="42" viewBox="0 0 42 42" fill="none">
<rect x="4.5" y="17.2" width="10.5" height="21.2" fill="#e8e8e8" stroke="#c4c4c4" stroke-width="1.4"/>
<rect x="15" y="3.3" width="10.7" height="35.1" fill="#f8f8f8" stroke="#c4c4c4" stroke-width="1.4"/>
<rect x="25.7" y="9.4" width="10.3" height="5.8" fill="#d6e6f5" stroke="#b8d4ee" stroke-width="1.2"/>
<rect x="20" y="17" width="19" height="23" fill="#f9f9f9"/>
<text x="20" y="38" font-family="Liberation Serif" font-style="italic" font-size="22" fill="#bdbdbd">fx</text>
</svg><div style="position:absolute;top:91.31px;font-size:15px;line-height:15px;color:#b9b9b9;font-weight:normal;white-space:nowrap;left:1325.00px;transform:scaleX(0.9726);transform-origin:0 0;">New visual</div><div style="position:absolute;top:111.31px;font-size:15px;line-height:15px;color:#b9b9b9;font-weight:normal;white-space:nowrap;left:1317.70px;transform:scaleX(0.9845);transform-origin:0 0;">calculation</div><svg style="position:absolute;left:1391px;top:116px;" width="9" height="7" viewBox="0 0 9 7" fill="none"><path d="M1 1.5l3.5 3.5 3.5-3.5" stroke="#b9b9b9" stroke-width="1.4"/></svg><svg style="position:absolute;left:1420px;top:44px;" width="30" height="42" viewBox="0 0 30 42" fill="none">
<rect x="3.5" y="3.5" width="23" height="35" fill="#fff" stroke="#4a4a4a" stroke-width="1.8"/>
<rect x="7" y="7" width="16" height="6" fill="#73b2e8" stroke="#1e7fcb" stroke-width="1"/>
<rect x="7" y="17" width="3.2" height="3.2" fill="#3a3a3a"/><rect x="13" y="17" width="3.2" height="3.2" fill="#3a3a3a"/><rect x="19" y="17" width="3.2" height="3.2" fill="#3a3a3a"/><rect x="7" y="23" width="3.2" height="3.2" fill="#3a3a3a"/><rect x="13" y="23" width="3.2" height="3.2" fill="#3a3a3a"/><rect x="19" y="23" width="3.2" height="3.2" fill="#3a3a3a"/><rect x="7" y="29" width="3.2" height="3.2" fill="#3a3a3a"/><rect x="13" y="29" width="3.2" height="3.2" fill="#3a3a3a"/><rect x="19" y="29" width="3.2" height="3.2" fill="#3a3a3a"/></svg><div style="position:absolute;top:91.31px;font-size:15px;line-height:15px;color:#252423;font-weight:normal;white-space:nowrap;left:1421.80px;transform:scaleX(0.9667);transform-origin:0 0;">New</div><div style="position:absolute;top:111.31px;font-size:15px;line-height:15px;color:#252423;font-weight:normal;white-space:nowrap;left:1408.60px;transform:scaleX(0.9603);transform-origin:0 0;">measure</div><svg style="position:absolute;left:1474px;top:42px;" width="38" height="44" viewBox="0 0 38 44" fill="none">
<rect x="11.3" y="6.2" width="22.4" height="33.3" fill="#fff" stroke="#4a4a4a" stroke-width="1.8"/>
<rect x="19" y="9.5" width="11.7" height="4.8" fill="#b0b0b0"/>
<rect x="15.5" y="19.0" width="3.2" height="3.2" fill="#3a3a3a"/><rect x="21.5" y="19.0" width="3.2" height="3.2" fill="#3a3a3a"/><rect x="27.5" y="19.0" width="3.2" height="3.2" fill="#3a3a3a"/><rect x="15.5" y="25.5" width="3.2" height="3.2" fill="#3a3a3a"/><rect x="21.5" y="25.5" width="3.2" height="3.2" fill="#3a3a3a"/><rect x="27.5" y="25.5" width="3.2" height="3.2" fill="#3a3a3a"/><rect x="15.5" y="32.0" width="3.2" height="3.2" fill="#3a3a3a"/><rect x="21.5" y="32.0" width="3.2" height="3.2" fill="#3a3a3a"/><rect x="27.5" y="32.0" width="3.2" height="3.2" fill="#3a3a3a"/>
<path d="M9 3.3h10l-5 9h6.5L5 27.9l4.5-11.5H3.2z" fill="#f6b040" stroke="#d9731a" stroke-width="1.1" stroke-linejoin="round"/>
</svg><div style="position:absolute;top:91.31px;font-size:15px;line-height:15px;color:#252423;font-weight:normal;white-space:nowrap;left:1478.00px;transform:scaleX(0.9692);transform-origin:0 0;">Quick</div><div style="position:absolute;top:111.31px;font-size:15px;line-height:15px;color:#252423;font-weight:normal;white-space:nowrap;left:1469.00px;transform:scaleX(0.9638);transform-origin:0 0;">measure</div><svg style="position:absolute;left:1566px;top:42px;" width="42" height="44" viewBox="0 0 42 44" fill="none">
<rect x="4.3" y="5.3" width="27.1" height="35.1" fill="#f6f9fc" stroke="#b8d4ee" stroke-width="1.6"/>
<path d="M25 3.3l-5 5 4 4-6 6 5 5 6-6 4 4 5-5z" fill="#f6f9fc" stroke="#9ec6e8" stroke-width="1.5" stroke-linejoin="round"/>
<path d="M11 21.5l4-4 13.5 11.5-4 4z" fill="#fff" stroke="#b8d4ee" stroke-width="1.5" stroke-linejoin="round"/>
<path d="M15 21l9 8" stroke="#b8d4ee" stroke-width="1.2"/>
</svg><div style="position:absolute;top:91.31px;font-size:15px;line-height:15px;color:#b9b9b9;font-weight:normal;white-space:nowrap;left:1550.60px;transform:scaleX(0.9721);transform-origin:0 0;">Sensitivity</div><svg style="position:absolute;left:1579px;top:116px;" width="9" height="7" viewBox="0 0 9 7" fill="none"><path d="M1 1.5l3.5 3.5 3.5-3.5" stroke="#b9b9b9" stroke-width="1.4"/></svg><svg style="position:absolute;left:1649px;top:44px;" width="42" height="44" viewBox="0 0 42 44" fill="none">
<path d="M16 13.3V6.3a3 3 0 0 1 3-3H26.5a3 3 0 0 1 3 3V38.4" stroke="#3a3a3a" stroke-width="1.8"/>
<path d="M9 24V16.3a3 3 0 0 1 3-3H24.6V38.4" stroke="#3a3a3a" stroke-width="1.8"/>
<path d="M17 38.4H6.4a3 3 0 0 1-3-3V27a3 3 0 0 1 3-3H17V38.4H28" stroke="#3a3a3a" stroke-width="1.8"/>
<rect x="26" y="24" width="7" height="17" fill="#f9f9f9"/>
<path d="M29.3 40.8V21.5M22.2 28.6l7.1-7.1 7.1 7.1" stroke="#1e7fcb" stroke-width="1.8"/>
</svg><div style="position:absolute;top:91.31px;font-size:15px;line-height:15px;color:#252423;font-weight:normal;white-space:nowrap;left:1642.50px;transform:scaleX(0.9653);transform-origin:0 0;">Publish</div><svg style="position:absolute;left:1741px;top:44px;" width="40" height="38" viewBox="0 0 40 38" fill="none">
<path d="M16.8 9H5.4v10h22.5" stroke="#3a3a3a" stroke-width="2" fill="none"/>
<rect x="5.4" y="23" width="26.4" height="10.2" fill="#fff" stroke="#3a3a3a" stroke-width="2"/>
<rect x="7.4" y="12" width="4.5" height="4.5" fill="#3a3a3a"/><rect x="24" y="25.7" width="4.5" height="4.2" fill="#3a3a3a"/>
<path d="M24.3 3.8C25 7.5 26 8.6 30 9.7 26 10.8 25 11.9 24.3 15.6 23.6 11.9 22.6 10.8 18.6 9.7 22.6 8.6 23.6 7.5 24.3 3.8Z" fill="#fff" stroke="#1e7fcb" stroke-width="1.3"/>
<path d="M31.7 13.6C32.1 15.6 32.6 16.1 34.8 16.9 32.6 17.7 32.1 18.2 31.7 20.3 31.3 18.2 30.8 17.7 28.6 16.9 30.8 16.1 31.3 15.6 31.7 13.6Z" fill="#fff" stroke="#1e7fcb" stroke-width="1.2"/>
</svg><div style="position:absolute;top:91.31px;font-size:15px;line-height:15px;color:#252423;font-weight:normal;white-space:nowrap;left:1715.60px;transform:scaleX(0.9931);transform-origin:0 0;">Prep data for</div><div style="position:absolute;top:111.31px;font-size:15px;line-height:15px;color:#252423;font-weight:normal;white-space:nowrap;left:1459px;width:600px;text-align:center;">AI</div><svg style="position:absolute;left:1810px;top:46px;" width="42" height="38" viewBox="0 0 42 38" fill="none">
<defs>
<linearGradient id="cpA" x1="0" y1="0" x2="0" y2="1"><stop offset="0" stop-color="#0ea0f0"/><stop offset=".5" stop-color="#3aa87a"/><stop offset="1" stop-color="#f4c400"/></linearGradient>
<linearGradient id="cpB" x1="0" y1="0" x2="0" y2="1"><stop offset="0" stop-color="#a956ee"/><stop offset=".55" stop-color="#ea5a96"/><stop offset="1" stop-color="#ff9d5c"/></linearGradient>
</defs>
<path d="M23.4 3.1H28C30 3.1 31 4.5 31.6 6.5L33 11H25.4Z" fill="#1746d0"/>
<path d="M11 26H20.8L17.6 35.1H14.8C13 35.1 12.2 33.8 11.8 32Z" fill="#e4482a"/>
<path d="M13 3.1H23.4L16.3 25.9H5.5C3 25.9 2.2 24 2.8 21.5L7.5 8C8.5 5 10 3.1 13 3.1Z" fill="url(#cpA)"/>
<path d="M25.4 11H36C38.8 11 40.2 13 39.4 16L34.8 30C33.8 33 32.3 35.1 29.5 35.1H17.6Z" fill="url(#cpB)"/>
</svg><div style="position:absolute;top:91.31px;font-size:15px;line-height:15px;color:#252423;font-weight:normal;white-space:nowrap;left:1806.40px;transform:scaleX(0.9937);transform-origin:0 0;">Copilot</div><div style="position:absolute;left:51px;top:152px;width:1602px;height:7px;background:linear-gradient(rgba(0,0,0,0.045),rgba(0,0,0,0));"></div><div style="position:absolute;left:102px;top:152px;width:2px;height:746px;background-image:repeating-linear-gradient(#4a4a4a 0 2px, transparent 2px 4px);"></div><div style="position:absolute;left:1544px;top:152px;width:2px;height:746px;background-image:repeating-linear-gradient(#4a4a4a 0 2px, transparent 2px 4px);"></div><div style="position:absolute;left:1599px;top:165px;width:11px;height:675px;background:#868686;border-radius:6px;"></div><div style="position:absolute;left:136px;top:166px;width:812px;height:528px;background:#e6e6e6;border:2px solid #6e6e6e;border-bottom:1px solid #2a2a2a;box-shadow:inset 1px 1px 0 #efefef;"></div><div style="position:absolute;left:138px;top:214px;width:808px;height:2px;background:#252423;"></div><div style="position:absolute;top:177.77px;font-size:18px;line-height:18px;color:#252423;font-weight:bold;white-space:nowrap;left:480.40px;transform:scaleX(0.9594);transform-origin:0 0;">Students Table</div><div style="position:absolute;top:218.77px;font-size:18px;line-height:18px;color:#252423;font-weight:normal;white-space:nowrap;left:143.60px;transform:scaleX(1.0407);transform-origin:0 0;">Sum of 10th Marks by Country</div><svg style="position:absolute;left:194px;top:643px;" width="744" height="1" viewBox="0 0 744 1" fill="none"><line x1="0" y1="0.5" x2="744" y2="0.5" stroke="#ababab" stroke-width="1" stroke-dasharray="1.2 4.48"/></svg><div style="position:absolute;top:637.00px;font-size:13px;line-height:13px;color:#666666;font-weight:normal;white-space:nowrap;left:-416px;width:600px;text-align:right;">0K</div><svg style="position:absolute;left:194px;top:565px;" width="744" height="1" viewBox="0 0 744 1" fill="none"><line x1="0" y1="0.5" x2="744" y2="0.5" stroke="#ababab" stroke-width="1" stroke-dasharray="1.2 4.48"/></svg><div style="position:absolute;top:559.00px;font-size:13px;line-height:13px;color:#666666;font-weight:normal;white-space:nowrap;left:-416px;width:600px;text-align:right;">1K</div><svg style="position:absolute;left:194px;top:487px;" width="744" height="1" viewBox="0 0 744 1" fill="none"><line x1="0" y1="0.5" x2="744" y2="0.5" stroke="#ababab" stroke-width="1" stroke-dasharray="1.2 4.48"/></svg><div style="position:absolute;top:481.00px;font-size:13px;line-height:13px;color:#666666;font-weight:normal;white-space:nowrap;left:-416px;width:600px;text-align:right;">2K</div><svg style="position:absolute;left:194px;top:409px;" width="744" height="1" viewBox="0 0 744 1" fill="none"><line x1="0" y1="0.5" x2="744" y2="0.5" stroke="#ababab" stroke-width="1" stroke-dasharray="1.2 4.48"/></svg><div style="position:absolute;top:403.00px;font-size:13px;line-height:13px;color:#666666;font-weight:normal;white-space:nowrap;left:-416px;width:600px;text-align:right;">3K</div><svg style="position:absolute;left:194px;top:331px;" width="744" height="1" viewBox="0 0 744 1" fill="none"><line x1="0" y1="0.5" x2="744" y2="0.5" stroke="#ababab" stroke-width="1" stroke-dasharray="1.2 4.48"/></svg><div style="position:absolute;top:325.00px;font-size:13px;line-height:13px;color:#666666;font-weight:normal;white-space:nowrap;left:-416px;width:600px;text-align:right;">4K</div><svg style="position:absolute;left:194px;top:253px;" width="744" height="1" viewBox="0 0 744 1" fill="none"><line x1="0" y1="0.5" x2="744" y2="0.5" stroke="#ababab" stroke-width="1" stroke-dasharray="1.2 4.48"/></svg><div style="position:absolute;top:247.00px;font-size:13px;line-height:13px;color:#666666;font-weight:normal;white-space:nowrap;left:-416px;width:600px;text-align:right;">5K</div><div style="position:absolute;left:234px;top:275px;width:76px;height:368px;background:#118dff;"></div><div style="position:absolute;top:650.00px;font-size:13px;line-height:13px;color:#666666;font-weight:normal;white-space:nowrap;left:-28px;width:600px;text-align:center;">India</div><div style="position:absolute;left:332px;top:550px;width:76px;height:93px;background:#118dff;"></div><div style="position:absolute;top:650.00px;font-size:13px;line-height:13px;color:#666666;font-weight:normal;white-space:nowrap;left:70px;width:600px;text-align:center;">New Zealand</div><div style="position:absolute;left:430px;top:570px;width:76px;height:73px;background:#118dff;"></div><div style="position:absolute;top:650.00px;font-size:13px;line-height:13px;color:#666666;font-weight:normal;white-space:nowrap;left:168px;width:600px;text-align:center;">Switzerland</div><div style="position:absolute;left:528px;top:571px;width:76px;height:72px;background:#118dff;"></div><div style="position:absolute;top:650.00px;font-size:13px;line-height:13px;color:#666666;font-weight:normal;white-space:nowrap;left:266px;width:600px;text-align:center;">Brazil</div><div style="position:absolute;left:626px;top:572px;width:76px;height:71px;background:#118dff;"></div><div style="position:absolute;top:650.00px;font-size:13px;line-height:13px;color:#666666;font-weight:normal;white-space:nowrap;left:364px;width:600px;text-align:center;">Australia</div><div style="position:absolute;left:724px;top:576px;width:76px;height:67px;background:#118dff;"></div><div style="position:absolute;top:650.00px;font-size:13px;line-height:13px;color:#666666;font-weight:normal;white-space:nowrap;left:462px;width:600px;text-align:center;">America</div><div style="position:absolute;left:822px;top:607px;width:76px;height:36px;background:#118dff;"></div><div style="position:absolute;top:650.00px;font-size:13px;line-height:13px;color:#666666;font-weight:normal;white-space:nowrap;left:560px;width:600px;text-align:center;">Canada</div><div style="position:absolute;top:670.61px;font-size:15px;line-height:15px;color:#252423;font-weight:normal;white-space:nowrap;left:539.00px;transform:scaleX(1.0566);transform-origin:0 0;-webkit-text-stroke:0.45px #252423;">Country</div><div style="position:absolute;left:152px;top:448px;width:0;height:0;"><div style="position:absolute;left:-150px;top:-8px;width:300px;height:16px;transform:rotate(-90deg);text-align:center;font-size:16px;line-height:16px;font-weight:normal;-webkit-text-stroke:0.45px #252423;color:#252423;white-space:nowrap;">Sum of 10th Marks</div></div><div style="position:absolute;left:977px;top:166px;width:166px;height:520px;background:#e6e6e6;border:2px solid #6e6e6e;border-bottom:1px solid #2a2a2a;box-shadow:inset 1px 1px 0 #efefef;"></div><div style="position:absolute;left:979px;top:216px;width:162px;height:2px;background:#252423;"></div><div style="position:absolute;top:177.77px;font-size:18px;line-height:18px;color:#252423;font-weight:bold;white-space:nowrap;left:998.50px;transform:scaleX(0.9602);transform-origin:0 0;">Students Table</div><div style="position:absolute;top:224.26px;font-size:16px;line-height:16px;color:#252423;font-weight:normal;white-space:nowrap;left:994.00px;transform:scaleX(0.9676);transform-origin:0 0;">Branch ID</div><div style="position:absolute;left:993px;top:250px;width:18px;height:18px;border:1px solid #6e6e6e;"></div><div style="position:absolute;top:251.37px;font-size:18px;line-height:18px;color:#252423;font-weight:normal;white-space:nowrap;left:1021px;">1</div><div style="position:absolute;left:993px;top:283px;width:18px;height:18px;border:1px solid #6e6e6e;"></div><div style="position:absolute;top:284.02px;font-size:18px;line-height:18px;color:#252423;font-weight:normal;white-space:nowrap;left:1021px;">2</div><div style="position:absolute;left:993px;top:315px;width:18px;height:18px;border:1px solid #6e6e6e;"></div><div style="position:absolute;top:316.67px;font-size:18px;line-height:18px;color:#252423;font-weight:normal;white-space:nowrap;left:1021px;">3</div><div style="position:absolute;left:993px;top:348px;width:18px;height:18px;border:1px solid #6e6e6e;"></div><div style="position:absolute;top:349.32px;font-size:18px;line-height:18px;color:#252423;font-weight:normal;white-space:nowrap;left:1021px;">4</div><div style="position:absolute;left:993px;top:381px;width:18px;height:18px;border:1px solid #6e6e6e;"></div><div style="position:absolute;top:381.97px;font-size:18px;line-height:18px;color:#252423;font-weight:normal;white-space:nowrap;left:1021px;">5</div><div style="position:absolute;left:993px;top:413px;width:18px;height:18px;border:1px solid #6e6e6e;"></div><div style="position:absolute;top:414.62px;font-size:18px;line-height:18px;color:#252423;font-weight:normal;white-space:nowrap;left:1021px;">6</div><div style="position:absolute;left:993px;top:446px;width:18px;height:18px;border:1px solid #6e6e6e;"></div><div style="position:absolute;top:447.27px;font-size:18px;line-height:18px;color:#252423;font-weight:normal;white-space:nowrap;left:1021px;">7</div><div style="position:absolute;left:993px;top:479px;width:18px;height:18px;border:1px solid #6e6e6e;"></div><div style="position:absolute;top:479.92px;font-size:18px;line-height:18px;color:#252423;font-weight:normal;white-space:nowrap;left:1021px;">8</div><div style="position:absolute;left:993px;top:511px;width:18px;height:18px;border:1px solid #6e6e6e;"></div><div style="position:absolute;top:512.57px;font-size:18px;line-height:18px;color:#252423;font-weight:normal;white-space:nowrap;left:1021px;">9</div><div style="position:absolute;left:993px;top:544px;width:18px;height:18px;border:1px solid #6e6e6e;"></div><div style="position:absolute;top:545.22px;font-size:18px;line-height:18px;color:#252423;font-weight:normal;white-space:nowrap;left:1021px;">10</div><div style="position:absolute;left:993px;top:576px;width:18px;height:18px;border:1px solid #6e6e6e;"></div><div style="position:absolute;top:577.87px;font-size:18px;line-height:18px;color:#252423;font-weight:normal;white-space:nowrap;left:1021px;">11</div><div style="position:absolute;left:993px;top:609px;width:18px;height:18px;border:1px solid #6e6e6e;"></div><div style="position:absolute;top:610.52px;font-size:18px;line-height:18px;color:#252423;font-weight:normal;white-space:nowrap;left:1021px;">12</div><div style="position:absolute;left:993px;top:642px;width:18px;height:18px;border:1px solid #6e6e6e;"></div><div style="position:absolute;top:643.17px;font-size:18px;line-height:18px;color:#252423;font-weight:normal;white-space:nowrap;left:1021px;">13</div><div style="position:absolute;left:1172px;top:166px;width:170px;height:518px;background:#e6e6e6;border:2px solid #6e6e6e;border-bottom:1px solid #2a2a2a;box-shadow:inset 1px 1px 0 #efefef;"></div><div style="position:absolute;left:1174px;top:216px;width:166px;height:2px;background:#252423;"></div><div style="position:absolute;top:177.77px;font-size:18px;line-height:18px;color:#252423;font-weight:bold;white-space:nowrap;left:1203.60px;transform:scaleX(0.9522);transform-origin:0 0;">Branch Table</div><div style="position:absolute;top:224.26px;font-size:16px;line-height:16px;color:#252423;font-weight:normal;white-space:nowrap;left:1189.00px;transform:scaleX(0.9804);transform-origin:0 0;">Branch</div><div style="position:absolute;left:1188px;top:250px;width:18px;height:18px;border:1px solid #6e6e6e;"></div><div style="position:absolute;top:251.37px;font-size:18px;line-height:18px;color:#252423;font-weight:normal;white-space:nowrap;left:1216.00px;transform:scaleX(0.9780);transform-origin:0 0;">Aeronautical</div><div style="position:absolute;left:1188px;top:283px;width:18px;height:18px;border:1px solid #6e6e6e;"></div><div style="position:absolute;top:284.02px;font-size:18px;line-height:18px;color:#252423;font-weight:normal;white-space:nowrap;left:1216.00px;transform:scaleX(1.0012);transform-origin:0 0;">Agriculture</div><div style="position:absolute;left:1188px;top:315px;width:18px;height:18px;border:1px solid #6e6e6e;"></div><div style="position:absolute;top:316.67px;font-size:18px;line-height:18px;color:#252423;font-weight:normal;white-space:nowrap;left:1216.00px;transform:scaleX(0.9847);transform-origin:0 0;">Biology</div><div style="position:absolute;left:1188px;top:348px;width:18px;height:18px;border:1px solid #6e6e6e;"></div><div style="position:absolute;top:349.32px;font-size:18px;line-height:18px;color:#252423;font-weight:normal;white-space:nowrap;left:1216.00px;transform:scaleX(0.9691);transform-origin:0 0;">Chemistry</div><div style="position:absolute;left:1188px;top:381px;width:18px;height:18px;border:1px solid #6e6e6e;"></div><div style="position:absolute;top:381.97px;font-size:18px;line-height:18px;color:#252423;font-weight:normal;white-space:nowrap;left:1216.00px;transform:scaleX(0.9235);transform-origin:0 0;">Civil</div><div style="position:absolute;left:1188px;top:413px;width:18px;height:18px;border:1px solid #6e6e6e;"></div><div style="position:absolute;top:414.62px;font-size:18px;line-height:18px;color:#252423;font-weight:normal;white-space:nowrap;left:1216.00px;transform:scaleX(0.9962);transform-origin:0 0;">Computer</div><div style="position:absolute;left:1188px;top:446px;width:18px;height:18px;border:1px solid #6e6e6e;"></div><div style="position:absolute;top:447.27px;font-size:18px;line-height:18px;color:#252423;font-weight:normal;white-space:nowrap;left:1216.00px;transform:scaleX(0.9411);transform-origin:0 0;">Electrical</div><div style="position:absolute;left:1188px;top:479px;width:18px;height:18px;border:1px solid #6e6e6e;"></div><div style="position:absolute;top:479.92px;font-size:18px;line-height:18px;color:#252423;font-weight:normal;white-space:nowrap;left:1216.00px;transform:scaleX(0.9172);transform-origin:0 0;">Fashion</div><div style="position:absolute;left:1188px;top:511px;width:18px;height:18px;border:1px solid #6e6e6e;"></div><div style="position:absolute;top:512.57px;font-size:18px;line-height:18px;color:#252423;font-weight:normal;white-space:nowrap;left:1216.00px;transform:scaleX(0.7750);transform-origin:0 0;">IT</div><div style="position:absolute;left:1188px;top:544px;width:18px;height:18px;border:1px solid #6e6e6e;"></div><div style="position:absolute;top:545.22px;font-size:18px;line-height:18px;color:#252423;font-weight:normal;white-space:nowrap;left:1216.00px;transform:scaleX(0.8188);transform-origin:0 0;">LLB</div><div style="position:absolute;left:1188px;top:576px;width:18px;height:18px;border:1px solid #6e6e6e;"></div><div style="position:absolute;top:577.87px;font-size:18px;line-height:18px;color:#252423;font-weight:normal;white-space:nowrap;left:1216.00px;transform:scaleX(0.9714);transform-origin:0 0;">Mechanical</div><div style="position:absolute;left:1188px;top:609px;width:18px;height:18px;border:1px solid #6e6e6e;"></div><div style="position:absolute;top:610.52px;font-size:18px;line-height:18px;color:#252423;font-weight:normal;white-space:nowrap;left:1216.00px;transform:scaleX(0.9444);transform-origin:0 0;">Pharmacy</div><div style="position:absolute;left:1188px;top:642px;width:18px;height:18px;border:1px solid #6e6e6e;"></div><div style="position:absolute;top:643.17px;font-size:18px;line-height:18px;color:#252423;font-weight:normal;white-space:nowrap;left:1216.00px;transform:scaleX(0.8968);transform-origin:0 0;">Physics</div><div style="position:absolute;left:1367px;top:166px;width:168px;height:520px;background:#e6e6e6;border:2px solid #6e6e6e;border-bottom:1px solid #2a2a2a;box-shadow:inset 1px 1px 0 #efefef;"></div><div style="position:absolute;left:1369px;top:216px;width:164px;height:2px;background:#252423;"></div><div style="position:absolute;top:177.77px;font-size:18px;line-height:18px;color:#252423;font-weight:bold;white-space:nowrap;left:1394.00px;transform:scaleX(0.9661);transform-origin:0 0;">Teacher Table</div><div style="position:absolute;top:224.26px;font-size:16px;line-height:16px;color:#252423;font-weight:normal;white-space:nowrap;left:1384.00px;transform:scaleX(0.8750);transform-origin:0 0;">ID</div><div style="position:absolute;left:1383px;top:250px;width:18px;height:18px;border:1px solid #6e6e6e;"></div><div style="position:absolute;top:251.37px;font-size:18px;line-height:18px;color:#252423;font-weight:normal;white-space:nowrap;left:1411px;">1</div><div style="position:absolute;left:1383px;top:283px;width:18px;height:18px;border:1px solid #6e6e6e;"></div><div style="position:absolute;top:284.02px;font-size:18px;line-height:18px;color:#252423;font-weight:normal;white-space:nowrap;left:1411px;">2</div><div style="position:absolute;left:1383px;top:315px;width:18px;height:18px;border:1px solid #6e6e6e;"></div><div style="position:absolute;top:316.67px;font-size:18px;line-height:18px;color:#252423;font-weight:normal;white-space:nowrap;left:1411px;">3</div><div style="position:absolute;left:1383px;top:348px;width:18px;height:18px;border:1px solid #6e6e6e;"></div><div style="position:absolute;top:349.32px;font-size:18px;line-height:18px;color:#252423;font-weight:normal;white-space:nowrap;left:1411px;">4</div><div style="position:absolute;left:1383px;top:381px;width:18px;height:18px;border:1px solid #6e6e6e;"></div><div style="position:absolute;top:381.97px;font-size:18px;line-height:18px;color:#252423;font-weight:normal;white-space:nowrap;left:1411px;">5</div><div style="position:absolute;left:1383px;top:413px;width:18px;height:18px;border:1px solid #6e6e6e;"></div><div style="position:absolute;top:414.62px;font-size:18px;line-height:18px;color:#252423;font-weight:normal;white-space:nowrap;left:1411px;">6</div><div style="position:absolute;left:1383px;top:446px;width:18px;height:18px;border:1px solid #6e6e6e;"></div><div style="position:absolute;top:447.27px;font-size:18px;line-height:18px;color:#252423;font-weight:normal;white-space:nowrap;left:1411px;">7</div><div style="position:absolute;left:1383px;top:479px;width:18px;height:18px;border:1px solid #6e6e6e;"></div><div style="position:absolute;top:479.92px;font-size:18px;line-height:18px;color:#252423;font-weight:normal;white-space:nowrap;left:1411px;">8</div><div style="position:absolute;left:1383px;top:511px;width:18px;height:18px;border:1px solid #6e6e6e;"></div><div style="position:absolute;top:512.57px;font-size:18px;line-height:18px;color:#252423;font-weight:normal;white-space:nowrap;left:1411px;">9</div><div style="position:absolute;left:1383px;top:544px;width:18px;height:18px;border:1px solid #6e6e6e;"></div><div style="position:absolute;top:545.22px;font-size:18px;line-height:18px;color:#252423;font-weight:normal;white-space:nowrap;left:1411px;">10</div><div style="position:absolute;left:136px;top:716px;width:273px;height:155px;background:#e6e6e6;border:2px solid #6e6e6e;border-bottom:1px solid #2a2a2a;box-shadow:inset 1px 1px 0 #efefef;"></div><div style="position:absolute;top:759.24px;font-size:60px;line-height:60px;color:#252423;font-weight:normal;white-space:nowrap;left:201.60px;transform:scaleX(0.8541);transform-origin:0 0;-webkit-text-stroke:1.6px #252423;">F</div><div style="position:absolute;top:759.24px;font-size:60px;line-height:60px;color:#252423;font-weight:normal;white-space:nowrap;left:234.60px;transform:scaleX(0.7235);transform-origin:0 0;-webkit-text-stroke:1.6px #252423;">a</div><div style="position:absolute;top:759.24px;font-size:60px;line-height:60px;color:#252423;font-weight:normal;white-space:nowrap;left:283.80px;transform:scaleX(0.8767);transform-origin:0 0;-webkit-text-stroke:1.6px #252423;">s</div><div style="position:absolute;top:759.24px;font-size:60px;line-height:60px;color:#252423;font-weight:normal;white-space:nowrap;left:316.40px;transform:scaleX(0.7818);transform-origin:0 0;-webkit-text-stroke:1.6px #252423;">e</div><svg style="position:absolute;left:266px;top:765px;" width="16" height="48" viewBox="0 0 16 48" fill="none"><path d="M5 2V35C5 40 7 42 12 42H13" stroke="#252423" stroke-width="6"/></svg><div style="position:absolute;top:827.77px;font-size:18px;line-height:18px;color:#6b6b6b;font-weight:normal;white-space:nowrap;left:193.60px;transform:scaleX(0.8865);transform-origin:0 0;">ISFILTERED Measure</div><div style="position:absolute;left:0px;top:152px;width:3px;height:49px;background:#117865;"></div><div style="position:absolute;left:50px;top:898px;width:1px;height:44px;background:#e1dfdd;"></div><div style="position:absolute;left:210px;top:898px;width:1px;height:44px;background:#c8c6c4;"></div><svg style="position:absolute;left:14px;top:165px;" width="24" height="22" viewBox="0 0 24 22" fill="none"><path d="M3.3 3.5V19.6H19.4" stroke="#252423" stroke-width="1.5"/><rect x="5.4" y="6.4" width="3.3" height="11.1" fill="#8a8a8a" stroke="#252423" stroke-width="1.2"/><rect x="10.3" y="8.8" width="3.3" height="8.7" fill="#8a8a8a" stroke="#252423" stroke-width="1.2"/><rect x="15.7" y="4.3" width="3.3" height="13.2" fill="#8a8a8a" stroke="#252423" stroke-width="1.2"/></svg><svg style="position:absolute;left:14px;top:215px;" width="24" height="22" viewBox="0 0 24 22" fill="none"><rect x="2" y="2" width="20" height="18" stroke="#777" stroke-width="1.5"/><path d="M2 8h20M2 14h20M9 2v18M15 2v18" stroke="#777" stroke-width="1.3"/></svg><svg style="position:absolute;left:13px;top:264px;" width="26" height="26" viewBox="0 0 26 26" fill="none"><rect x="2" y="8" width="10" height="10" stroke="#888" stroke-width="1.5"/><rect x="15" y="2" width="9" height="8" stroke="#888" stroke-width="1.5"/><rect x="15" y="15" width="9" height="9" stroke="#888" stroke-width="1.5"/><path d="M2 13h10M15 6h9M15 19h9M12 13h3" stroke="#888" stroke-width="1.3"/></svg><svg style="position:absolute;left:10px;top:312px;" width="30" height="28" viewBox="0 0 30 28" fill="none"><path d="M9 13V4.5h9.5l4.5 4.5v9M18.5 4.5V9H23" stroke="#7a7a7a" stroke-width="1.4"/><path d="M23.5 15c1.5 2 1.5 6-1 8" stroke="#7a7a7a" stroke-width="1.3"/><text x="12" y="23.5" font-size="9.5" text-anchor="middle" fill="#7a7a7a" font-family="Liberation Sans" font-weight="bold">DAX</text></svg><svg style="position:absolute;left:10px;top:362px;" width="30" height="28" viewBox="0 0 30 28" fill="none"><path d="M8 13V3.5h9.5l4.5 4.5v5M17.5 3.5V8H22" stroke="#7a7a7a" stroke-width="1.4"/><text x="15.3" y="23.5" font-size="9" text-anchor="middle" fill="#7a7a7a" font-family="Liberation Sans" font-weight="bold" textLength="23" lengthAdjust="spacingAndGlyphs">TMDL</text></svg><svg style="position:absolute;left:1624px;top:166px;" width="19" height="19" viewBox="0 0 19 19" fill="none"><path d="M9 2.3L2.5 9.5 9 16.7M16.5 2.3L10 9.5 16.5 16.7" stroke="#252423" stroke-width="1.5"/></svg><svg style="position:absolute;left:1628px;top:202px;" width="17" height="18" viewBox="0 0 17 18" fill="none"><path d="M15.5 1.5V16.5L8 11H1.5V7.5H8Z" stroke="#252423" stroke-width="1.5" stroke-linejoin="round"/></svg><div style="position:absolute;left:1633px;top:229px;width:0;height:0;"><div style="position:absolute;left:0;top:0;transform:rotate(90deg);transform-origin:0 0;font-size:18px;line-height:18px;font-weight:normal;-webkit-text-stroke:0.6px #252423;letter-spacing:0.7px;color:#252423;white-space:nowrap;margin-left:9px;">Filters</div></div><div style="position:absolute;top:167.63px;font-size:19px;line-height:19px;color:#252423;font-weight:bold;white-space:nowrap;left:1665.00px;transform:scaleX(0.9643);transform-origin:0 0;">Data</div><div style="position:absolute;left:1826px;top:175px;width:3px;height:3px;background:#252423;border-radius:50%;"></div><div style="position:absolute;left:1833px;top:175px;width:3px;height:3px;background:#252423;border-radius:50%;"></div><div style="position:absolute;left:1840px;top:175px;width:3px;height:3px;background:#252423;border-radius:50%;"></div><svg style="position:absolute;left:1852px;top:166px;" width="19" height="19" viewBox="0 0 19 19" fill="none"><path d="M2.5 2.3L9 9.5 2.5 16.7M10 2.3L16.5 9.5 10 16.7" stroke="#252423" stroke-width="1.3"/></svg><div style="position:absolute;left:1660px;top:210px;width:214px;height:29px;background:#fff;border:1px solid #d1d1d1;border-bottom:1px solid #616161;border-radius:5px;"></div><svg style="position:absolute;left:1674px;top:215px;" width="20" height="20" viewBox="0 0 20 20" fill="none"><circle cx="8" cy="8" r="6" stroke="#424242" stroke-width="1.5"/><path d="M12.5 12.5l5 5" stroke="#424242" stroke-width="1.5"/></svg><div style="position:absolute;top:216.57px;font-size:18px;line-height:18px;color:#616161;font-weight:normal;white-space:nowrap;left:1701.60px;transform:scaleX(0.8842);transform-origin:0 0;">Search</div><svg style="position:absolute;left:1673px;top:257px;" width="11" height="16" viewBox="0 0 11 16" fill="none"><path d="M1.5 1l7 7-7 7" stroke="#424242" stroke-width="1.3"/></svg><svg style="position:absolute;left:1690px;top:257px;" width="16" height="16" viewBox="0 0 16 16" fill="none"><rect x="1" y="1" width="14" height="14" rx="2.5" stroke="#3a3a3a" stroke-width="1.4"/><path d="M1 4.6h14M1 11.4h14M4.6 1v14M11.4 1v14" stroke="#3a3a3a" stroke-width="1.4"/></svg><div style="position:absolute;top:258.11px;font-size:15px;line-height:15px;color:#323130;font-weight:normal;white-space:nowrap;left:1713.50px;transform:scaleX(0.9437);transform-origin:0 0;">Branch Table</div><svg style="position:absolute;left:1670px;top:290px;" width="16" height="10" viewBox="0 0 16 10" fill="none"><path d="M1.5 2l6.5 6.5L14.5 2" stroke="#424242" stroke-width="1.3"/></svg><svg style="position:absolute;left:1690px;top:287px;" width="16" height="16" viewBox="0 0 16 16" fill="none"><rect x="1" y="1" width="14" height="14" rx="2.5" stroke="#3a3a3a" stroke-width="1.4"/><path d="M1 4.6h14M1 11.4h14M4.6 1v14M11.4 1v14" stroke="#3a3a3a" stroke-width="1.4"/></svg><div style="position:absolute;top:288.11px;font-size:15px;line-height:15px;color:#323130;font-weight:normal;white-space:nowrap;left:1713.50px;transform:scaleX(0.9556);transform-origin:0 0;">Students Table</div><div style="position:absolute;left:1709px;top:318px;width:15px;height:15px;border:1px solid #6e6e6e;border-radius:2px;background:#fff0;"></div><svg style="position:absolute;left:1734px;top:317px;" width="15" height="16" viewBox="0 0 15 16" fill="none"><path d="M13 2H2.5l6 6-6 6.5H13.5" stroke="#3a3a3a" stroke-width="1.4" fill="none"/></svg><div style="position:absolute;top:318.11px;font-size:15px;line-height:15px;color:#323130;font-weight:normal;white-space:nowrap;left:1757.50px;transform:scaleX(0.9743);transform-origin:0 0;">10th Marks</div><div style="position:absolute;left:1709px;top:348px;width:15px;height:15px;border:1px solid #6e6e6e;border-radius:2px;background:#fff0;"></div><svg style="position:absolute;left:1734px;top:347px;" width="15" height="16" viewBox="0 0 15 16" fill="none"><path d="M13 2H2.5l6 6-6 6.5H13.5" stroke="#3a3a3a" stroke-width="1.4" fill="none"/></svg><div style="position:absolute;top:348.11px;font-size:15px;line-height:15px;color:#323130;font-weight:normal;white-space:nowrap;left:1757.50px;transform:scaleX(0.9743);transform-origin:0 0;">12th Marks</div><div style="position:absolute;left:1709px;top:378px;width:15px;height:15px;border:1px solid #6e6e6e;border-radius:2px;background:#fff0;"></div><div style="position:absolute;top:378.11px;font-size:15px;line-height:15px;color:#323130;font-weight:normal;white-space:nowrap;left:1756.80px;transform:scaleX(0.9403);transform-origin:0 0;">Branch ID</div><div style="position:absolute;left:1709px;top:408px;width:15px;height:15px;border:1px solid #6e6e6e;border-radius:2px;background:#fff0;"></div><svg style="position:absolute;left:1733px;top:406px;" width="20" height="20" viewBox="0 0 20 20" fill="none"><path d="M9 16.3H4.2a2.5 2.5 0 0 1-2.5-2.5V4.4a2.5 2.5 0 0 1 2.5-2.5H14.1a2.5 2.5 0 0 1 2.5 2.5V8.5" stroke="#3a3a3a" stroke-width="1.4"/><path d="M4.6 2.2V16M4.6 4.8H16.4" stroke="#3a3a3a" stroke-width="1.2"/><path d="M14 6.3C12.2 6.3 11.4 7.3 11.4 9V15.6C11.4 17.6 10.6 18.6 8.6 18.6M9.2 10.3H13.4" stroke="#3a3a3a" stroke-width="1.4"/><path d="M13.4 13.2L18.8 18.6M18.8 13.2L13.4 18.6" stroke="#3a3a3a" stroke-width="1.5"/></svg><div style="position:absolute;top:408.11px;font-size:15px;line-height:15px;color:#323130;font-weight:normal;white-space:nowrap;left:1756.80px;transform:scaleX(0.9712);transform-origin:0 0;">Column</div><div style="position:absolute;left:1709px;top:438px;width:15px;height:15px;border:1px solid #6e6e6e;border-radius:2px;background:#fff0;"></div><svg style="position:absolute;left:1733px;top:436px;" width="20" height="20" viewBox="0 0 20 20" fill="none"><path d="M9 16.3H4.2a2.5 2.5 0 0 1-2.5-2.5V4.4a2.5 2.5 0 0 1 2.5-2.5H14.1a2.5 2.5 0 0 1 2.5 2.5V8.5" stroke="#3a3a3a" stroke-width="1.4"/><path d="M4.6 2.2V16M4.6 4.8H16.4" stroke="#3a3a3a" stroke-width="1.2"/><path d="M14 6.3C12.2 6.3 11.4 7.3 11.4 9V15.6C11.4 17.6 10.6 18.6 8.6 18.6M9.2 10.3H13.4" stroke="#3a3a3a" stroke-width="1.4"/><path d="M13.4 13.2L18.8 18.6M18.8 13.2L13.4 18.6" stroke="#3a3a3a" stroke-width="1.5"/></svg><div style="position:absolute;top:438.11px;font-size:15px;line-height:15px;color:#323130;font-weight:normal;white-space:nowrap;left:1756.80px;transform:scaleX(0.9844);transform-origin:0 0;">Column 2</div><div style="position:absolute;left:1709px;top:468px;width:15px;height:15px;border:1px solid #6e6e6e;border-radius:2px;background:#fff0;"></div><svg style="position:absolute;left:1733px;top:466px;" width="20" height="20" viewBox="0 0 20 20" fill="none"><path d="M9 16.3H4.2a2.5 2.5 0 0 1-2.5-2.5V4.4a2.5 2.5 0 0 1 2.5-2.5H14.1a2.5 2.5 0 0 1 2.5 2.5V8.5" stroke="#3a3a3a" stroke-width="1.4"/><path d="M4.6 2.2V16M4.6 4.8H16.4" stroke="#3a3a3a" stroke-width="1.2"/><path d="M19 10.5H10.5L14.8 14.6 10.5 18.7H19" stroke="#3a3a3a" stroke-width="1.5"/></svg><div style="position:absolute;top:468.11px;font-size:15px;line-height:15px;color:#323130;font-weight:normal;white-space:nowrap;left:1756.80px;transform:scaleX(0.9844);transform-origin:0 0;">Column 3</div><div style="position:absolute;left:1709px;top:498px;width:15px;height:15px;border:1px solid #6e6e6e;border-radius:2px;background:#fff0;"></div><div style="position:absolute;top:498.11px;font-size:15px;line-height:15px;color:#323130;font-weight:normal;white-space:nowrap;left:1756.80px;transform:scaleX(0.9792);transform-origin:0 0;">Country</div><div style="position:absolute;left:1709px;top:528px;width:15px;height:15px;border:1px solid #6e6e6e;border-radius:2px;background:#fff0;"></div><div style="position:absolute;top:528.11px;font-size:15px;line-height:15px;color:#323130;font-weight:normal;white-space:nowrap;left:1756.80px;transform:scaleX(0.9000);transform-origin:0 0;">Email</div><div style="position:absolute;left:1709px;top:558px;width:15px;height:15px;border:1px solid #6e6e6e;border-radius:2px;background:#fff0;"></div><svg style="position:absolute;left:1734px;top:557px;" width="16" height="16" viewBox="0 0 16 16" fill="none"><rect x="1" y="1" width="14" height="14" rx="3" stroke="#3a3a3a" stroke-width="1.5"/><path d="M1.5 4.5h13" stroke="#3a3a3a" stroke-width="1.3"/><circle cx="4.7" cy="8.3" r="0.95" fill="#3a3a3a"/><circle cx="8.0" cy="8.3" r="0.95" fill="#3a3a3a"/><circle cx="11.3" cy="8.3" r="0.95" fill="#3a3a3a"/><circle cx="4.7" cy="11.3" r="0.95" fill="#3a3a3a"/><circle cx="8.0" cy="11.3" r="0.95" fill="#3a3a3a"/></svg><svg style="position:absolute;left:1692px;top:557px;" width="11" height="16" viewBox="0 0 11 16" fill="none"><path d="M1.5 1l7 7-7 7" stroke="#424242" stroke-width="1.3"/></svg><div style="position:absolute;top:558.11px;font-size:15px;line-height:15px;color:#323130;font-weight:normal;white-space:nowrap;left:1756.80px;transform:scaleX(0.9824);transform-origin:0 0;">Enrollment Date</div><div style="position:absolute;left:1709px;top:588px;width:15px;height:15px;border:1px solid #6e6e6e;border-radius:2px;background:#fff0;"></div><svg style="position:absolute;left:1734px;top:587px;" width="15" height="16" viewBox="0 0 15 16" fill="none"><path d="M13 2H2.5l6 6-6 6.5H13.5" stroke="#3a3a3a" stroke-width="1.4" fill="none"/></svg><div style="position:absolute;top:588.11px;font-size:15px;line-height:15px;color:#323130;font-weight:normal;white-space:nowrap;left:1756.80px;transform:scaleX(0.9836);transform-origin:0 0;">Graduation Mar...</div><div style="position:absolute;left:1709px;top:618px;width:15px;height:15px;border:1px solid #6e6e6e;border-radius:2px;background:#fff0;"></div><svg style="position:absolute;left:1734px;top:616px;" width="16" height="18" viewBox="0 0 16 18" fill="none"><rect x="1" y="1" width="14" height="16" rx="3" stroke="#3a3a3a" stroke-width="1.5"/><rect x="3.6" y="3.6" width="8.8" height="3.8" rx="1" stroke="#3a3a3a" stroke-width="1.2"/><circle cx="4.7" cy="10.5" r="1.1" fill="#3a3a3a"/><circle cx="8.0" cy="10.5" r="1.1" fill="#3a3a3a"/><circle cx="11.3" cy="10.5" r="1.1" fill="#3a3a3a"/><circle cx="4.7" cy="14.0" r="1.1" fill="#3a3a3a"/><circle cx="8.0" cy="14.0" r="1.1" fill="#3a3a3a"/><circle cx="11.3" cy="14.0" r="1.1" fill="#3a3a3a"/></svg><div style="position:absolute;top:618.11px;font-size:15px;line-height:15px;color:#323130;font-weight:normal;white-space:nowrap;left:1756.80px;transform:scaleX(0.8779);transform-origin:0 0;">ISFILTERED Mea...</div><div style="position:absolute;left:1709px;top:648px;width:15px;height:15px;border:1px solid #6e6e6e;border-radius:2px;background:#fff0;"></div><div style="position:absolute;top:648.11px;font-size:15px;line-height:15px;color:#323130;font-weight:normal;white-space:nowrap;left:1756.80px;transform:scaleX(0.9725);transform-origin:0 0;">Name</div><div style="position:absolute;left:1709px;top:678px;width:15px;height:15px;border:1px solid #6e6e6e;border-radius:2px;background:#fff0;"></div><svg style="position:absolute;left:1734px;top:676px;" width="16" height="18" viewBox="0 0 16 18" fill="none"><rect x="1" y="1" width="14" height="16" rx="3" stroke="#3a3a3a" stroke-width="1.5"/><rect x="3.6" y="3.6" width="8.8" height="3.8" rx="1" stroke="#3a3a3a" stroke-width="1.2"/><circle cx="4.7" cy="10.5" r="1.1" fill="#3a3a3a"/><circle cx="8.0" cy="10.5" r="1.1" fill="#3a3a3a"/><circle cx="11.3" cy="10.5" r="1.1" fill="#3a3a3a"/><circle cx="4.7" cy="14.0" r="1.1" fill="#3a3a3a"/><circle cx="8.0" cy="14.0" r="1.1" fill="#3a3a3a"/><circle cx="11.3" cy="14.0" r="1.1" fill="#3a3a3a"/></svg><div style="position:absolute;top:678.11px;font-size:15px;line-height:15px;color:#323130;font-weight:normal;white-space:nowrap;left:1756.80px;transform:scaleX(0.9613);transform-origin:0 0;">Sum Measure</div><div style="position:absolute;left:1709px;top:708px;width:15px;height:15px;border:1px solid #6e6e6e;border-radius:2px;background:#fff0;"></div><svg style="position:absolute;left:1734px;top:707px;" width="15" height="16" viewBox="0 0 15 16" fill="none"><path d="M13 2H2.5l6 6-6 6.5H13.5" stroke="#3a3a3a" stroke-width="1.4" fill="none"/></svg><div style="position:absolute;top:708.11px;font-size:15px;line-height:15px;color:#323130;font-weight:normal;white-space:nowrap;left:1756.80px;transform:scaleX(0.9531);transform-origin:0 0;">Total</div><div style="position:absolute;left:1709px;top:738px;width:15px;height:15px;border:1px solid #6e6e6e;border-radius:2px;background:#fff0;"></div><svg style="position:absolute;left:1734px;top:737px;" width="15" height="16" viewBox="0 0 15 16" fill="none"><path d="M13 2H2.5l6 6-6 6.5H13.5" stroke="#3a3a3a" stroke-width="1.4" fill="none"/></svg><div style="position:absolute;top:738.11px;font-size:15px;line-height:15px;color:#323130;font-weight:normal;white-space:nowrap;left:1756.80px;transform:scaleX(0.9358);transform-origin:0 0;">Year of Passout</div><svg style="position:absolute;left:1673px;top:767px;" width="11" height="16" viewBox="0 0 11 16" fill="none"><path d="M1.5 1l7 7-7 7" stroke="#424242" stroke-width="1.3"/></svg><svg style="position:absolute;left:1690px;top:767px;" width="16" height="16" viewBox="0 0 16 16" fill="none"><rect x="1" y="1" width="14" height="14" rx="2.5" stroke="#3a3a3a" stroke-width="1.4"/><path d="M1 4.6h14M1 11.4h14M4.6 1v14M11.4 1v14" stroke="#3a3a3a" stroke-width="1.4"/></svg><div style="position:absolute;top:767.91px;font-size:15px;line-height:15px;color:#323130;font-weight:normal;white-space:nowrap;left:1713.90px;transform:scaleX(0.9355);transform-origin:0 0;">Teacher Table</div><div style="position:absolute;left:1880px;top:152px;width:38px;height:40px;background:#e0e0e0;border:1px solid #8a8a8a;border-right:none;"></div><svg style="position:absolute;left:1889px;top:160px;" width="22" height="24" viewBox="0 0 22 24" fill="none"><ellipse cx="11" cy="5.5" rx="8.5" ry="3.5" stroke="#3a3a3a" stroke-width="1.5"/><path d="M2.5 5.5v13c0 4.5 17 4.5 17 0v-13" stroke="#3a3a3a" stroke-width="1.5"/></svg><svg style="position:absolute;left:1889px;top:200px;" width="26" height="26" viewBox="0 0 26 26" fill="none"><path d="M1.5 23.4V10.4H7.7M7.7 23.4V1.8H15.1V6H21.3V8.6M1.5 23.4H12.7" stroke="#3a3a3a" stroke-width="1.5"/><path d="M12.7 12.5v9.5c0 2.6 11.1 2.6 11.1 0v-9.5" fill="#fff" stroke="#e07b20" stroke-width="1.5"/><ellipse cx="18.25" cy="12.5" rx="5.55" ry="2.1" fill="#fff" stroke="#e07b20" stroke-width="1.5"/></svg><svg style="position:absolute;left:1889px;top:240px;" width="26" height="26" viewBox="0 0 26 26" fill="none"><path d="M1.5 20.5V10.6H7.7M7.7 20.5V1.4H15.1V5.6H21.3V8.2" stroke="#3a3a3a" stroke-width="1.5"/><path d="M22.8 8.8L13.2 18.6" stroke="#3a3a3a" stroke-width="2.6" stroke-linecap="round"/><path d="M22.8 8.8L13.2 18.6" stroke="#fff" stroke-width="0.9" stroke-linecap="round"/><path d="M4 24.3C8 24.2 12.8 22.8 14.6 18L12.6 16.2C9 17.2 8.6 21.5 4 24.3Z" fill="#5a9ee0" stroke="#1e7fcb" stroke-width="1"/></svg><svg style="position:absolute;left:1889px;top:280px;" width="26" height="26" viewBox="0 0 26 26" fill="none"><path d="M14 23.2H2.8V1.6H20.7V11" stroke="#3a3a3a" stroke-width="1.5"/><path d="M6.5 20V13.5H9.5V8.5H13V14" stroke="#9a9a9a" stroke-width="1.4"/><circle cx="18.2" cy="18" r="5.6" fill="#fff" stroke="#1e7fcb" stroke-width="1.5"/><path d="M16.2 11.2h4M18.2 11.2v1.2M18.2 15.2v3h2.4" stroke="#1e7fcb" stroke-width="1.3"/></svg><svg style="position:absolute;left:1892px;top:320px;" width="16" height="26" viewBox="0 0 16 26" fill="none"><path d="M1.5 1.5h12.6v22.4l-6.3-6.2-6.3 6.2z" fill="#fff" stroke="#3a3a3a" stroke-width="1.5" stroke-linejoin="miter"/></svg><svg style="position:absolute;left:1886px;top:358px;" width="30" height="28" viewBox="0 0 30 28" fill="none"><path d="M17.5 2.5h7.5v4.5M12.5 8.5H25v3.5M3.5 15v10.5H13M8 14.5v6.5h5" stroke="#3a3a3a" stroke-width="1.4"/><path d="M13.5 14.5h13.5l-4.8 5.3v6.6h-3.9v-6.6z" fill="#fff" stroke="#3a3a3a" stroke-width="1.4" stroke-linejoin="round"/><path d="M2.8 9A6.2 6.2 0 0 1 13.6 5.2M15.2 8.6A6.2 6.2 0 0 1 4.4 12.6" stroke="#2f9e44" stroke-width="1.9"/><path d="M14.3 1.8v4h-4M3.7 15.8v-4h4" stroke="#2f9e44" stroke-width="1.9"/></svg><svg style="position:absolute;left:1887px;top:398px;" width="28" height="28" viewBox="0 0 28 28" fill="none"><rect x="9.5" y="2.9" width="15.2" height="14.1" fill="#f7cf8a" stroke="#e09a30" stroke-width="1.3"/><rect x="2" y="13.2" width="13.3" height="12.5" fill="#fff" stroke="#3a3a3a" stroke-width="1.5"/><path d="M14 10.5V24.5L17.2 21.3 19.6 26.2 21.6 25.2 19.3 20.4H24Z" fill="#fff" stroke="#3a3a3a" stroke-width="1.3" stroke-linejoin="round"/></svg><svg style="position:absolute;left:1888px;top:440px;" width="24" height="24" viewBox="0 0 24 24" fill="none"><path d="M11.8 1.4v21.5M1 11.7h21.6" stroke="#252423" stroke-width="1.7"/></svg><div style="position:absolute;left:1880px;top:902px;width:38px;height:1px;background:#e1dfdd;"></div><svg style="position:absolute;left:1886px;top:909px;" width="28" height="28" viewBox="0 0 28 28" fill="none"><path d="M14 3l2.2 2.6 3.4-.6.8 3.3 3.2 1.4-1.4 3.2 1.4 3.2-3.2 1.4-.8 3.3-3.4-.6L14 23.8l-2.2-2.6-3.4.6-.8-3.3-3.2-1.4 1.4-3.2-1.4-3.2 3.2-1.4.8-3.3 3.4.6z" stroke="#3a3a3a" stroke-width="1.5" transform="translate(0 0.5)"/><circle cx="14" cy="13.8" r="3.5" stroke="#3a3a3a" stroke-width="1.5"/></svg><svg style="position:absolute;left:64px;top:906px;" width="28" height="20" viewBox="0 0 28 20" fill="none"><rect x="2" y="2" width="23" height="13" stroke="#3a3a3a" stroke-width="1.4"/><path d="M13.5 15v3M8 18.5h11" stroke="#3a3a3a" stroke-width="1.4"/></svg><div style="position:absolute;left:63px;top:934px;width:31px;height:3px;background:#117865;border-radius:2px;"></div><svg style="position:absolute;left:123px;top:903px;" width="20" height="28" viewBox="0 0 20 28" fill="none"><rect x="2.5" y="2" width="15" height="24" rx="2" stroke="#3a3a3a" stroke-width="1.4"/><path d="M9 22h2" stroke="#3a3a3a" stroke-width="1.4"/></svg><svg style="position:absolute;left:167px;top:913px;" width="8" height="12" viewBox="0 0 8 12" fill="none"><path d="M6 1L1 6l5 5z" fill="#c8c8c8"/></svg><svg style="position:absolute;left:195px;top:913px;" width="8" height="12" viewBox="0 0 8 12" fill="none"><path d="M2 1l5 5-5 5z" fill="#c8c8c8"/></svg><div style="position:absolute;left:211px;top:898px;width:232px;height:44px;background:#fff;"></div><div style="position:absolute;left:211px;top:937px;width:232px;height:5px;background:#117865;"></div><div style="position:absolute;top:913.26px;font-size:16px;line-height:16px;color:#252423;font-weight:normal;white-space:nowrap;left:236.50px;transform:scaleX(0.8897);transform-origin:0 0;-webkit-text-stroke:0.35px #252423;">ISFILTERED DAX Function-I</div><div style="position:absolute;left:443px;top:898px;width:1px;height:39px;background:#c8c6c4;"></div><div style="position:absolute;left:443px;top:898px;width:232px;height:44px;background:#fff;"></div><div style="position:absolute;top:913.26px;font-size:16px;line-height:16px;color:#252423;font-weight:normal;white-space:nowrap;left:469.50px;transform:scaleX(0.8569);transform-origin:0 0;">ISFILTERED DAX Function-II</div><div style="position:absolute;left:675px;top:898px;width:49px;height:44px;background:#117865;"></div><svg style="position:absolute;left:689px;top:910px;" width="20" height="20" viewBox="0 0 20 20" fill="none"><path d="M10 3v14M3 10h14" stroke="#fff" stroke-width="3"/></svg><div style="position:absolute;top:951.21px;font-size:15px;line-height:15px;color:#323130;font-weight:normal;white-space:nowrap;left:5.50px;transform:scaleX(0.9468);transform-origin:0 0;">Page 1 of 2</div><div style="position:absolute;top:949.31px;font-size:15px;line-height:15px;color:#252423;font-weight:normal;white-space:nowrap;left:1358px;width:600px;text-align:center;">-</div><div style="position:absolute;left:1667px;top:957px;width:125px;height:1px;background:#6e6e6e;"></div><div style="position:absolute;left:1720px;top:951px;width:5px;height:13px;background:#5a5a5a;"></div><div style="position:absolute;left:1729px;top:953px;width:1px;height:9px;background:#6e6e6e;"></div><div style="position:absolute;top:948.77px;font-size:18px;line-height:18px;color:#252423;font-weight:normal;white-space:nowrap;left:1503px;width:600px;text-align:center;">+</div><div style="position:absolute;top:949.31px;font-size:15px;line-height:15px;color:#605e5c;font-weight:normal;white-space:nowrap;left:1825.00px;transform:scaleX(0.9333);transform-origin:0 0;">90%</div><svg style="position:absolute;left:1877px;top:950px;" width="21" height="16" viewBox="0 0 21 16" fill="none"><rect x="0.5" y="0.5" width="20" height="15" stroke="#6e6e6e"/><path d="M4 6V4h3M14 4h3v2M17 10v2h-3M7 12H4v-2" stroke="#3a3a3a" stroke-width="1.3"/></svg>
</body></html>
